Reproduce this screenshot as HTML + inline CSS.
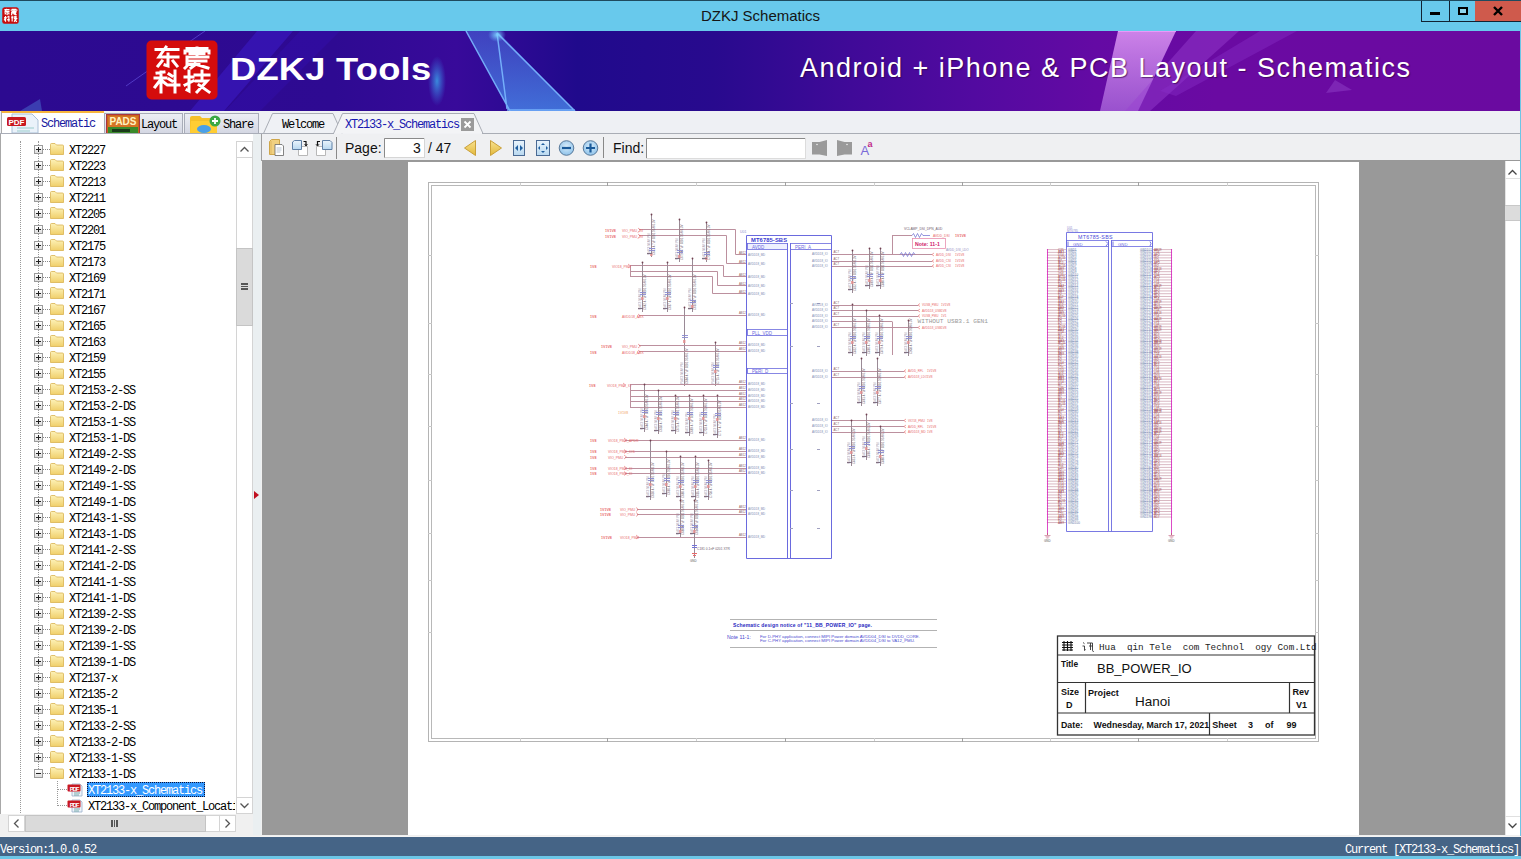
<!DOCTYPE html>
<html><head><meta charset="utf-8">
<style>
*{margin:0;padding:0;box-sizing:border-box}
html,body{width:1521px;height:859px;overflow:hidden;background:#f0f0f0;font-family:"Liberation Sans",sans-serif}
.abs{position:absolute}
#titlebar{left:0;top:0;width:1521px;height:31px;background:#68c9ec;border-top:1px solid #1e4a5e}
#title{left:0;top:7px;width:1521px;text-align:center;font-size:15px;color:#151515}
#banner{left:0;top:31px;width:1520px;height:80px;background:linear-gradient(90deg,#2e0990 0%,#2d0a8e 45%,#2b0a90 52%,#3f0b98 58%,#520aa0 66%,#5e0aa2 74%,#690aa0 85%,#6b0a9d 100%)}
#tabbar{left:0;top:111px;width:1520px;height:23px;background:#eef0f4}
#left{left:0;top:134px;width:253px;height:701px;background:#fff}
#splitter{left:253px;top:134px;width:8px;height:701px;background:#eaeff1}
#toolbar{left:262px;top:134px;width:1259px;height:27px;background:#eff0f2;border-bottom:1px solid #999}
#viewer{left:262px;top:161px;width:1243px;height:674px;background:#999}
#page{left:408px;top:162px;width:951px;height:673px;background:#fff}
#vscroll{left:1505px;top:161px;width:15px;height:674px;background:#fff}
#status{left:0;top:836px;width:1521px;height:23px;background:#456486;border-bottom:3px solid #6cc6e6;border-top:1px solid #f4f4f4}
.mono{font-family:"Liberation Mono",monospace}
.tree{font-family:"Liberation Mono",monospace;font-size:12px;letter-spacing:-1.2px;color:#000;line-height:16px;white-space:nowrap}
.row{position:absolute;left:0;height:16px;width:235px}
.row .t{position:absolute;left:69px;top:2px}
.pbox{position:absolute;left:34px;top:4px;width:9px;height:9px;border:1px solid #9b9b9b;background:linear-gradient(#fff,#ddd)}
.pbox:before{content:"";position:absolute;left:1px;top:3px;width:5px;height:1px;background:#222}
.pbox.p:after{content:"";position:absolute;left:3px;top:1px;width:1px;height:5px;background:#222}
.hd{position:absolute;left:43px;top:8px;width:7px;border-top:1px dotted #888}
.fold{position:absolute;left:50px;top:2px;width:14px;height:12px}
.tabtxt{font-family:"Liberation Mono",monospace;font-size:12px;letter-spacing:-1.2px;white-space:nowrap}
</style></head><body>
<div id="titlebar" class="abs"></div>
<svg class="abs" style="left:2px;top:7px" width="17" height="17" viewBox="0 0 72 60" preserveAspectRatio="none"><rect x="1" y="1" width="70" height="58" rx="9" fill="#c80c0c"/><g stroke="#fff" stroke-width="5" fill="none"><g transform="translate(8,7)"><path d="M2 2.5H24M12 0L5 10H24M14 7V19L11 18M8 14L4 19M19 14L23 19"/></g><g transform="translate(38,7)"><path d="M3 1.5H23M1 6V4H25V6M13 1V8M3 10H24M3 10V19L1 21M6 14H22M11 17L24 21"/></g><g transform="translate(8,31)"><path d="M1 7H12M7 1V21M7 8L1 16M15 3L18 5M14 14H25M21 0V21"/></g><g transform="translate(38,31)"><path d="M1 6H9M5 0V20M11 4H25M18 0V9M12 10H23L13 21M15 14L25 21"/></g></g></svg>
<div id="title" class="abs">DZKJ Schematics</div>
<div class="abs" style="left:1421px;top:1px;width:29px;height:21px;border:1px solid #123;border-top:0;border-right:0"></div>
<div class="abs" style="left:1449px;top:1px;width:26px;height:21px;border-left:1px solid #123;border-bottom:1px solid #123"></div>
<div class="abs" style="left:1475px;top:1px;width:46px;height:21px;background:#cf5a4c;border-bottom:1px solid #123"></div>
<div class="abs" style="left:1430px;top:12px;width:10px;height:3px;background:#000"></div>
<div class="abs" style="left:1458px;top:7px;width:10px;height:8px;border:2px solid #000;background:#8fd6ee"></div>
<svg class="abs" style="left:1493px;top:6px" width="10" height="10" viewBox="0 0 10 10"><path d="M1 1L9 9M9 1L1 9" stroke="#000" stroke-width="2.4"/></svg>

<div id="banner" class="abs"></div>
<svg class="abs" style="left:0;top:31px" width="1520" height="80" viewBox="0 0 1520 80">
  <defs>
    <radialGradient id="glow" cx="0.5" cy="0.5" r="0.5"><stop offset="0" stop-color="#7fd8ff" stop-opacity="0.9"/><stop offset="1" stop-color="#6fb8ff" stop-opacity="0"/></radialGradient>
    <radialGradient id="glow2" cx="0.5" cy="0.5" r="0.5"><stop offset="0" stop-color="#3aa0e8" stop-opacity="0.85"/><stop offset="1" stop-color="#3a80e8" stop-opacity="0"/></radialGradient>
    <linearGradient id="bg" x1="0" y1="0" x2="1520" y2="0" gradientUnits="userSpaceOnUse">
      <stop offset="0" stop-color="#2c0a90"/><stop offset="0.22" stop-color="#2e0a92"/><stop offset="0.3" stop-color="#380a9a"/>
      <stop offset="0.38" stop-color="#200a8c"/><stop offset="0.47" stop-color="#280a8e"/><stop offset="0.56" stop-color="#400a98"/>
      <stop offset="0.64" stop-color="#520aa0"/><stop offset="0.72" stop-color="#640aa4"/><stop offset="0.8" stop-color="#6a0aa2"/><stop offset="1" stop-color="#6a0aa0"/>
    </linearGradient>
    <linearGradient id="shard" x1="0" y1="0" x2="0" y2="1"><stop offset="0" stop-color="#4a70e0" stop-opacity="0.55"/><stop offset="1" stop-color="#4a90f0" stop-opacity="0.75"/></linearGradient>
    <linearGradient id="pink" x1="0" y1="0" x2="0" y2="1"><stop offset="0" stop-color="#d890f0" stop-opacity="0.9"/><stop offset="1" stop-color="#b070e0" stop-opacity="0.7"/></linearGradient>
  </defs>
  <rect x="0" y="0" width="1520" height="80" fill="url(#bg)"/>
  <polygon points="257,0 293,0 224,80 190,80" fill="#3c1cc8" opacity="0.55"/>
  <polygon points="300,0 340,0 260,80 225,80" fill="#3414b8" opacity="0.3"/>
  <path d="M205 0L126 55" stroke="#6a5ae8" stroke-width="1" opacity="0.6"/>
  <polygon points="466,0 497,0 575,80 510,80" fill="url(#shard)"/>
  <path d="M466 0L510 80M497 2L507 78M497 2L575 80M507 79H575" stroke="#7ab8ff" stroke-width="1.5" fill="none" opacity="0.9"/>
  <ellipse cx="497" cy="4" rx="9" ry="7" fill="url(#glow)"/>
  <ellipse cx="437" cy="50" rx="9" ry="25" fill="url(#glow2)"/>
  <polygon points="1118,0 1176,0 1138,80 1100,80" fill="url(#pink)"/>
  <path d="M1118 0H1176" stroke="#f0a0ff" stroke-width="2" opacity="0.8"/>
  <polygon points="1196,0 1239,0 1150,80 1125,80" fill="#9a40d0" opacity="0.45"/>
  <polygon points="1260,0 1297,0 1176,65 1160,60" fill="#8a30c8" opacity="0.4"/>
  <polygon points="1326,62 1352,59 1335,49" fill="#9040c8" opacity="0.5"/>
  <polygon points="20,80 40,68 42,80" fill="#4a70d0" opacity="0.5"/>
</svg>
<svg class="abs" style="left:146px;top:40px" width="72" height="60" viewBox="0 0 72 60">
  <rect x="0.5" y="0.5" width="71" height="59" rx="5" fill="#d40c0c"/>
  <g stroke="#fff" stroke-width="3.0" fill="none" stroke-linecap="square">
   <g transform="translate(8,7)"><path d="M2 2.5H24M12 0L5 10H24M14 7V19L11 18M8 14L4 19M19 14L23 19"/></g>
   <g transform="translate(38,7)"><path d="M3 1.5H23M1 6V4H25V6M13 1V8M6 6.5H10M16 6.5H20M3 10H24M3 10V19L1 21M6 14H22M6 17.5H15M11 17L24 21M7 21L11 18"/></g>
   <g transform="translate(8,31)"><path d="M3 2L10 1M1 7H12M7 1V21M7 8L1 16M7 9L12 13M15 3L18 5M15 8L18 10M14 14H25M21 0V21"/></g>
   <g transform="translate(38,31)"><path d="M1 6H9M5 0V20L3 19M1 14L9 10M11 4H25M18 0V9M12 10H23L13 21M15 14L25 21"/></g>
  </g>
</svg>
<div class="abs" style="left:230px;top:51px;font-size:32px;font-weight:bold;color:#fff;letter-spacing:0.2px;white-space:nowrap;transform:scaleX(1.135);transform-origin:0 0">DZKJ Tools</div>
<div class="abs" style="left:800px;top:53px;font-size:27px;color:#fff;letter-spacing:1.5px;white-space:nowrap;text-shadow:1px 1px 1px rgba(40,0,60,0.6)">Android + iPhone &amp; PCB Layout - Schematics</div>

<div id="tabbar" class="abs"></div>
<!-- schematic tab -->
<div class="abs" style="left:1px;top:111px;width:103px;height:24px;background:#fff;border-top:2px solid #f7b53d;border-left:1px solid #aaa"></div>
<svg class="abs" style="left:6px;top:113px" width="34" height="21" viewBox="0 0 34 21"><path d="M6 1H26L32 7V20H6Z" fill="#eaf2fa" stroke="#aac0d8"/><path d="M11 15H28M11 18H24" stroke="#9cc" stroke-width="1.2"/><rect x="1" y="4" width="19" height="9" rx="1.5" fill="#c81820"/><text x="10.5" y="11.8" font-size="8" font-family="Liberation Sans" font-weight="bold" fill="#fff" text-anchor="middle">PDF</text></svg>
<div class="abs tabtxt" style="left:41px;top:117px;color:#1818a0">Schematic</div>
<!-- layout tab -->
<div class="abs" style="left:104px;top:113px;width:79px;height:21px;background:linear-gradient(#eceef4,#d3d6e2);border:1px solid #a8acb8;border-bottom:0"></div>
<svg class="abs" style="left:106px;top:114px" width="34" height="20" viewBox="0 0 34 20"><rect x="0.5" y="0.5" width="33" height="19.5" fill="#c8661a" stroke="#a34"/><rect x="2" y="2" width="30" height="17" fill="#d67424"/><text x="17" y="11" font-size="10" font-family="Liberation Sans" font-weight="bold" fill="#fff3c0" text-anchor="middle">PADS</text><rect x="2" y="13" width="30" height="7" fill="#3a8a2a"/><rect x="6" y="15" width="18" height="3" fill="#1a3a1a"/></svg>
<div class="abs tabtxt" style="left:141px;top:118px;color:#000">Layout</div>
<!-- share tab -->
<div class="abs" style="left:184px;top:113px;width:75px;height:21px;background:linear-gradient(#eceef4,#d3d6e2);border:1px solid #a8acb8;border-bottom:0"></div>
<svg class="abs" style="left:189px;top:114px" width="34" height="20" viewBox="0 0 34 20"><path d="M1 4Q1 2 3 2H11L13 4H28V20H1Z" fill="#f5c02a"/><path d="M2 7H28V20H1Z" fill="#ffcd33"/><ellipse cx="15" cy="15" rx="7" ry="4" fill="#4aa0e8"/><circle cx="26" cy="7" r="5.5" fill="#3aa844"/><path d="M26 4V10M23 7H29" stroke="#fff" stroke-width="1.8"/></svg>
<div class="abs tabtxt" style="left:223px;top:118px;color:#000">Share</div>
<!-- document tabs -->
<svg class="abs" style="left:255px;top:111px" width="1266" height="24" viewBox="0 0 1266 24">
  <path d="M8.5 22.5L17.5 2.5H78L87 22.5" fill="#eff1f5" stroke="#a9adb5"/>
  <path d="M78.5 22.5L87.5 2.5H219L228 22.5" fill="#f3f4f6" stroke="#a9adb5"/>
  <path d="M0 22.5H79M227 22.5H1266" stroke="#a9adb5"/>
</svg>
<div class="abs tabtxt" style="left:282px;top:118px;color:#000">Welcome</div>
<div class="abs tabtxt" style="left:345px;top:118px;color:#1818b0">XT2133-x_Schematics</div>
<div class="abs" style="left:461px;top:118px;width:13px;height:13px;background:#9a9a9a"></div>
<svg class="abs" style="left:461px;top:118px" width="13" height="13"><path d="M3.5 3.5L9.5 9.5M9.5 3.5L3.5 9.5" stroke="#fff" stroke-width="1.8"/></svg>

<!-- left tree panel -->
<div id="left" class="abs"></div>
<div id="splitter" class="abs"></div>
<div class="abs" style="left:0;top:133px;width:262px;height:1px;background:#a9adb8"></div>
<div class="abs" style="left:0;top:134px;width:1px;height:701px;background:#a8a8a8"></div>
<svg class="abs" style="left:254px;top:491px" width="5" height="8"><path d="M0 0L5 4L0 8Z" fill="#c01020"/></svg>
<div id="tree" class="abs tree" style="left:0;top:141px;width:235px;height:674px;overflow:hidden">
<div style="position:absolute;left:20px;top:0;height:674px;border-left:1px dotted #999"></div>
<div style="position:absolute;left:38px;top:0;height:632px;border-left:1px dotted #999"></div>
<div class="row" style="top:0px"><div class="hd"></div><div class="pbox p"></div><svg class="fold" viewBox="0 0 14 12"><defs><linearGradient id="fg" x1="0" y1="0" x2="0" y2="1"><stop offset="0" stop-color="#fdf2b8"/><stop offset="1" stop-color="#f0cf6a"/></linearGradient></defs><path d="M0.5 1.5Q0.5 0.5 1.5 0.5H5L6.5 2H12.5Q13.5 2 13.5 3V11.5H0.5Z" fill="url(#fg)" stroke="#d9b250" stroke-width="0.8"/></svg><span class="t">XT2227</span></div>
<div class="row" style="top:16px"><div class="hd"></div><div class="pbox p"></div><svg class="fold" viewBox="0 0 14 12"><defs><linearGradient id="fg" x1="0" y1="0" x2="0" y2="1"><stop offset="0" stop-color="#fdf2b8"/><stop offset="1" stop-color="#f0cf6a"/></linearGradient></defs><path d="M0.5 1.5Q0.5 0.5 1.5 0.5H5L6.5 2H12.5Q13.5 2 13.5 3V11.5H0.5Z" fill="url(#fg)" stroke="#d9b250" stroke-width="0.8"/></svg><span class="t">XT2223</span></div>
<div class="row" style="top:32px"><div class="hd"></div><div class="pbox p"></div><svg class="fold" viewBox="0 0 14 12"><defs><linearGradient id="fg" x1="0" y1="0" x2="0" y2="1"><stop offset="0" stop-color="#fdf2b8"/><stop offset="1" stop-color="#f0cf6a"/></linearGradient></defs><path d="M0.5 1.5Q0.5 0.5 1.5 0.5H5L6.5 2H12.5Q13.5 2 13.5 3V11.5H0.5Z" fill="url(#fg)" stroke="#d9b250" stroke-width="0.8"/></svg><span class="t">XT2213</span></div>
<div class="row" style="top:48px"><div class="hd"></div><div class="pbox p"></div><svg class="fold" viewBox="0 0 14 12"><defs><linearGradient id="fg" x1="0" y1="0" x2="0" y2="1"><stop offset="0" stop-color="#fdf2b8"/><stop offset="1" stop-color="#f0cf6a"/></linearGradient></defs><path d="M0.5 1.5Q0.5 0.5 1.5 0.5H5L6.5 2H12.5Q13.5 2 13.5 3V11.5H0.5Z" fill="url(#fg)" stroke="#d9b250" stroke-width="0.8"/></svg><span class="t">XT2211</span></div>
<div class="row" style="top:64px"><div class="hd"></div><div class="pbox p"></div><svg class="fold" viewBox="0 0 14 12"><defs><linearGradient id="fg" x1="0" y1="0" x2="0" y2="1"><stop offset="0" stop-color="#fdf2b8"/><stop offset="1" stop-color="#f0cf6a"/></linearGradient></defs><path d="M0.5 1.5Q0.5 0.5 1.5 0.5H5L6.5 2H12.5Q13.5 2 13.5 3V11.5H0.5Z" fill="url(#fg)" stroke="#d9b250" stroke-width="0.8"/></svg><span class="t">XT2205</span></div>
<div class="row" style="top:80px"><div class="hd"></div><div class="pbox p"></div><svg class="fold" viewBox="0 0 14 12"><defs><linearGradient id="fg" x1="0" y1="0" x2="0" y2="1"><stop offset="0" stop-color="#fdf2b8"/><stop offset="1" stop-color="#f0cf6a"/></linearGradient></defs><path d="M0.5 1.5Q0.5 0.5 1.5 0.5H5L6.5 2H12.5Q13.5 2 13.5 3V11.5H0.5Z" fill="url(#fg)" stroke="#d9b250" stroke-width="0.8"/></svg><span class="t">XT2201</span></div>
<div class="row" style="top:96px"><div class="hd"></div><div class="pbox p"></div><svg class="fold" viewBox="0 0 14 12"><defs><linearGradient id="fg" x1="0" y1="0" x2="0" y2="1"><stop offset="0" stop-color="#fdf2b8"/><stop offset="1" stop-color="#f0cf6a"/></linearGradient></defs><path d="M0.5 1.5Q0.5 0.5 1.5 0.5H5L6.5 2H12.5Q13.5 2 13.5 3V11.5H0.5Z" fill="url(#fg)" stroke="#d9b250" stroke-width="0.8"/></svg><span class="t">XT2175</span></div>
<div class="row" style="top:112px"><div class="hd"></div><div class="pbox p"></div><svg class="fold" viewBox="0 0 14 12"><defs><linearGradient id="fg" x1="0" y1="0" x2="0" y2="1"><stop offset="0" stop-color="#fdf2b8"/><stop offset="1" stop-color="#f0cf6a"/></linearGradient></defs><path d="M0.5 1.5Q0.5 0.5 1.5 0.5H5L6.5 2H12.5Q13.5 2 13.5 3V11.5H0.5Z" fill="url(#fg)" stroke="#d9b250" stroke-width="0.8"/></svg><span class="t">XT2173</span></div>
<div class="row" style="top:128px"><div class="hd"></div><div class="pbox p"></div><svg class="fold" viewBox="0 0 14 12"><defs><linearGradient id="fg" x1="0" y1="0" x2="0" y2="1"><stop offset="0" stop-color="#fdf2b8"/><stop offset="1" stop-color="#f0cf6a"/></linearGradient></defs><path d="M0.5 1.5Q0.5 0.5 1.5 0.5H5L6.5 2H12.5Q13.5 2 13.5 3V11.5H0.5Z" fill="url(#fg)" stroke="#d9b250" stroke-width="0.8"/></svg><span class="t">XT2169</span></div>
<div class="row" style="top:144px"><div class="hd"></div><div class="pbox p"></div><svg class="fold" viewBox="0 0 14 12"><defs><linearGradient id="fg" x1="0" y1="0" x2="0" y2="1"><stop offset="0" stop-color="#fdf2b8"/><stop offset="1" stop-color="#f0cf6a"/></linearGradient></defs><path d="M0.5 1.5Q0.5 0.5 1.5 0.5H5L6.5 2H12.5Q13.5 2 13.5 3V11.5H0.5Z" fill="url(#fg)" stroke="#d9b250" stroke-width="0.8"/></svg><span class="t">XT2171</span></div>
<div class="row" style="top:160px"><div class="hd"></div><div class="pbox p"></div><svg class="fold" viewBox="0 0 14 12"><defs><linearGradient id="fg" x1="0" y1="0" x2="0" y2="1"><stop offset="0" stop-color="#fdf2b8"/><stop offset="1" stop-color="#f0cf6a"/></linearGradient></defs><path d="M0.5 1.5Q0.5 0.5 1.5 0.5H5L6.5 2H12.5Q13.5 2 13.5 3V11.5H0.5Z" fill="url(#fg)" stroke="#d9b250" stroke-width="0.8"/></svg><span class="t">XT2167</span></div>
<div class="row" style="top:176px"><div class="hd"></div><div class="pbox p"></div><svg class="fold" viewBox="0 0 14 12"><defs><linearGradient id="fg" x1="0" y1="0" x2="0" y2="1"><stop offset="0" stop-color="#fdf2b8"/><stop offset="1" stop-color="#f0cf6a"/></linearGradient></defs><path d="M0.5 1.5Q0.5 0.5 1.5 0.5H5L6.5 2H12.5Q13.5 2 13.5 3V11.5H0.5Z" fill="url(#fg)" stroke="#d9b250" stroke-width="0.8"/></svg><span class="t">XT2165</span></div>
<div class="row" style="top:192px"><div class="hd"></div><div class="pbox p"></div><svg class="fold" viewBox="0 0 14 12"><defs><linearGradient id="fg" x1="0" y1="0" x2="0" y2="1"><stop offset="0" stop-color="#fdf2b8"/><stop offset="1" stop-color="#f0cf6a"/></linearGradient></defs><path d="M0.5 1.5Q0.5 0.5 1.5 0.5H5L6.5 2H12.5Q13.5 2 13.5 3V11.5H0.5Z" fill="url(#fg)" stroke="#d9b250" stroke-width="0.8"/></svg><span class="t">XT2163</span></div>
<div class="row" style="top:208px"><div class="hd"></div><div class="pbox p"></div><svg class="fold" viewBox="0 0 14 12"><defs><linearGradient id="fg" x1="0" y1="0" x2="0" y2="1"><stop offset="0" stop-color="#fdf2b8"/><stop offset="1" stop-color="#f0cf6a"/></linearGradient></defs><path d="M0.5 1.5Q0.5 0.5 1.5 0.5H5L6.5 2H12.5Q13.5 2 13.5 3V11.5H0.5Z" fill="url(#fg)" stroke="#d9b250" stroke-width="0.8"/></svg><span class="t">XT2159</span></div>
<div class="row" style="top:224px"><div class="hd"></div><div class="pbox p"></div><svg class="fold" viewBox="0 0 14 12"><defs><linearGradient id="fg" x1="0" y1="0" x2="0" y2="1"><stop offset="0" stop-color="#fdf2b8"/><stop offset="1" stop-color="#f0cf6a"/></linearGradient></defs><path d="M0.5 1.5Q0.5 0.5 1.5 0.5H5L6.5 2H12.5Q13.5 2 13.5 3V11.5H0.5Z" fill="url(#fg)" stroke="#d9b250" stroke-width="0.8"/></svg><span class="t">XT2155</span></div>
<div class="row" style="top:240px"><div class="hd"></div><div class="pbox p"></div><svg class="fold" viewBox="0 0 14 12"><defs><linearGradient id="fg" x1="0" y1="0" x2="0" y2="1"><stop offset="0" stop-color="#fdf2b8"/><stop offset="1" stop-color="#f0cf6a"/></linearGradient></defs><path d="M0.5 1.5Q0.5 0.5 1.5 0.5H5L6.5 2H12.5Q13.5 2 13.5 3V11.5H0.5Z" fill="url(#fg)" stroke="#d9b250" stroke-width="0.8"/></svg><span class="t">XT2153-2-SS</span></div>
<div class="row" style="top:256px"><div class="hd"></div><div class="pbox p"></div><svg class="fold" viewBox="0 0 14 12"><defs><linearGradient id="fg" x1="0" y1="0" x2="0" y2="1"><stop offset="0" stop-color="#fdf2b8"/><stop offset="1" stop-color="#f0cf6a"/></linearGradient></defs><path d="M0.5 1.5Q0.5 0.5 1.5 0.5H5L6.5 2H12.5Q13.5 2 13.5 3V11.5H0.5Z" fill="url(#fg)" stroke="#d9b250" stroke-width="0.8"/></svg><span class="t">XT2153-2-DS</span></div>
<div class="row" style="top:272px"><div class="hd"></div><div class="pbox p"></div><svg class="fold" viewBox="0 0 14 12"><defs><linearGradient id="fg" x1="0" y1="0" x2="0" y2="1"><stop offset="0" stop-color="#fdf2b8"/><stop offset="1" stop-color="#f0cf6a"/></linearGradient></defs><path d="M0.5 1.5Q0.5 0.5 1.5 0.5H5L6.5 2H12.5Q13.5 2 13.5 3V11.5H0.5Z" fill="url(#fg)" stroke="#d9b250" stroke-width="0.8"/></svg><span class="t">XT2153-1-SS</span></div>
<div class="row" style="top:288px"><div class="hd"></div><div class="pbox p"></div><svg class="fold" viewBox="0 0 14 12"><defs><linearGradient id="fg" x1="0" y1="0" x2="0" y2="1"><stop offset="0" stop-color="#fdf2b8"/><stop offset="1" stop-color="#f0cf6a"/></linearGradient></defs><path d="M0.5 1.5Q0.5 0.5 1.5 0.5H5L6.5 2H12.5Q13.5 2 13.5 3V11.5H0.5Z" fill="url(#fg)" stroke="#d9b250" stroke-width="0.8"/></svg><span class="t">XT2153-1-DS</span></div>
<div class="row" style="top:304px"><div class="hd"></div><div class="pbox p"></div><svg class="fold" viewBox="0 0 14 12"><defs><linearGradient id="fg" x1="0" y1="0" x2="0" y2="1"><stop offset="0" stop-color="#fdf2b8"/><stop offset="1" stop-color="#f0cf6a"/></linearGradient></defs><path d="M0.5 1.5Q0.5 0.5 1.5 0.5H5L6.5 2H12.5Q13.5 2 13.5 3V11.5H0.5Z" fill="url(#fg)" stroke="#d9b250" stroke-width="0.8"/></svg><span class="t">XT2149-2-SS</span></div>
<div class="row" style="top:320px"><div class="hd"></div><div class="pbox p"></div><svg class="fold" viewBox="0 0 14 12"><defs><linearGradient id="fg" x1="0" y1="0" x2="0" y2="1"><stop offset="0" stop-color="#fdf2b8"/><stop offset="1" stop-color="#f0cf6a"/></linearGradient></defs><path d="M0.5 1.5Q0.5 0.5 1.5 0.5H5L6.5 2H12.5Q13.5 2 13.5 3V11.5H0.5Z" fill="url(#fg)" stroke="#d9b250" stroke-width="0.8"/></svg><span class="t">XT2149-2-DS</span></div>
<div class="row" style="top:336px"><div class="hd"></div><div class="pbox p"></div><svg class="fold" viewBox="0 0 14 12"><defs><linearGradient id="fg" x1="0" y1="0" x2="0" y2="1"><stop offset="0" stop-color="#fdf2b8"/><stop offset="1" stop-color="#f0cf6a"/></linearGradient></defs><path d="M0.5 1.5Q0.5 0.5 1.5 0.5H5L6.5 2H12.5Q13.5 2 13.5 3V11.5H0.5Z" fill="url(#fg)" stroke="#d9b250" stroke-width="0.8"/></svg><span class="t">XT2149-1-SS</span></div>
<div class="row" style="top:352px"><div class="hd"></div><div class="pbox p"></div><svg class="fold" viewBox="0 0 14 12"><defs><linearGradient id="fg" x1="0" y1="0" x2="0" y2="1"><stop offset="0" stop-color="#fdf2b8"/><stop offset="1" stop-color="#f0cf6a"/></linearGradient></defs><path d="M0.5 1.5Q0.5 0.5 1.5 0.5H5L6.5 2H12.5Q13.5 2 13.5 3V11.5H0.5Z" fill="url(#fg)" stroke="#d9b250" stroke-width="0.8"/></svg><span class="t">XT2149-1-DS</span></div>
<div class="row" style="top:368px"><div class="hd"></div><div class="pbox p"></div><svg class="fold" viewBox="0 0 14 12"><defs><linearGradient id="fg" x1="0" y1="0" x2="0" y2="1"><stop offset="0" stop-color="#fdf2b8"/><stop offset="1" stop-color="#f0cf6a"/></linearGradient></defs><path d="M0.5 1.5Q0.5 0.5 1.5 0.5H5L6.5 2H12.5Q13.5 2 13.5 3V11.5H0.5Z" fill="url(#fg)" stroke="#d9b250" stroke-width="0.8"/></svg><span class="t">XT2143-1-SS</span></div>
<div class="row" style="top:384px"><div class="hd"></div><div class="pbox p"></div><svg class="fold" viewBox="0 0 14 12"><defs><linearGradient id="fg" x1="0" y1="0" x2="0" y2="1"><stop offset="0" stop-color="#fdf2b8"/><stop offset="1" stop-color="#f0cf6a"/></linearGradient></defs><path d="M0.5 1.5Q0.5 0.5 1.5 0.5H5L6.5 2H12.5Q13.5 2 13.5 3V11.5H0.5Z" fill="url(#fg)" stroke="#d9b250" stroke-width="0.8"/></svg><span class="t">XT2143-1-DS</span></div>
<div class="row" style="top:400px"><div class="hd"></div><div class="pbox p"></div><svg class="fold" viewBox="0 0 14 12"><defs><linearGradient id="fg" x1="0" y1="0" x2="0" y2="1"><stop offset="0" stop-color="#fdf2b8"/><stop offset="1" stop-color="#f0cf6a"/></linearGradient></defs><path d="M0.5 1.5Q0.5 0.5 1.5 0.5H5L6.5 2H12.5Q13.5 2 13.5 3V11.5H0.5Z" fill="url(#fg)" stroke="#d9b250" stroke-width="0.8"/></svg><span class="t">XT2141-2-SS</span></div>
<div class="row" style="top:416px"><div class="hd"></div><div class="pbox p"></div><svg class="fold" viewBox="0 0 14 12"><defs><linearGradient id="fg" x1="0" y1="0" x2="0" y2="1"><stop offset="0" stop-color="#fdf2b8"/><stop offset="1" stop-color="#f0cf6a"/></linearGradient></defs><path d="M0.5 1.5Q0.5 0.5 1.5 0.5H5L6.5 2H12.5Q13.5 2 13.5 3V11.5H0.5Z" fill="url(#fg)" stroke="#d9b250" stroke-width="0.8"/></svg><span class="t">XT2141-2-DS</span></div>
<div class="row" style="top:432px"><div class="hd"></div><div class="pbox p"></div><svg class="fold" viewBox="0 0 14 12"><defs><linearGradient id="fg" x1="0" y1="0" x2="0" y2="1"><stop offset="0" stop-color="#fdf2b8"/><stop offset="1" stop-color="#f0cf6a"/></linearGradient></defs><path d="M0.5 1.5Q0.5 0.5 1.5 0.5H5L6.5 2H12.5Q13.5 2 13.5 3V11.5H0.5Z" fill="url(#fg)" stroke="#d9b250" stroke-width="0.8"/></svg><span class="t">XT2141-1-SS</span></div>
<div class="row" style="top:448px"><div class="hd"></div><div class="pbox p"></div><svg class="fold" viewBox="0 0 14 12"><defs><linearGradient id="fg" x1="0" y1="0" x2="0" y2="1"><stop offset="0" stop-color="#fdf2b8"/><stop offset="1" stop-color="#f0cf6a"/></linearGradient></defs><path d="M0.5 1.5Q0.5 0.5 1.5 0.5H5L6.5 2H12.5Q13.5 2 13.5 3V11.5H0.5Z" fill="url(#fg)" stroke="#d9b250" stroke-width="0.8"/></svg><span class="t">XT2141-1-DS</span></div>
<div class="row" style="top:464px"><div class="hd"></div><div class="pbox p"></div><svg class="fold" viewBox="0 0 14 12"><defs><linearGradient id="fg" x1="0" y1="0" x2="0" y2="1"><stop offset="0" stop-color="#fdf2b8"/><stop offset="1" stop-color="#f0cf6a"/></linearGradient></defs><path d="M0.5 1.5Q0.5 0.5 1.5 0.5H5L6.5 2H12.5Q13.5 2 13.5 3V11.5H0.5Z" fill="url(#fg)" stroke="#d9b250" stroke-width="0.8"/></svg><span class="t">XT2139-2-SS</span></div>
<div class="row" style="top:480px"><div class="hd"></div><div class="pbox p"></div><svg class="fold" viewBox="0 0 14 12"><defs><linearGradient id="fg" x1="0" y1="0" x2="0" y2="1"><stop offset="0" stop-color="#fdf2b8"/><stop offset="1" stop-color="#f0cf6a"/></linearGradient></defs><path d="M0.5 1.5Q0.5 0.5 1.5 0.5H5L6.5 2H12.5Q13.5 2 13.5 3V11.5H0.5Z" fill="url(#fg)" stroke="#d9b250" stroke-width="0.8"/></svg><span class="t">XT2139-2-DS</span></div>
<div class="row" style="top:496px"><div class="hd"></div><div class="pbox p"></div><svg class="fold" viewBox="0 0 14 12"><defs><linearGradient id="fg" x1="0" y1="0" x2="0" y2="1"><stop offset="0" stop-color="#fdf2b8"/><stop offset="1" stop-color="#f0cf6a"/></linearGradient></defs><path d="M0.5 1.5Q0.5 0.5 1.5 0.5H5L6.5 2H12.5Q13.5 2 13.5 3V11.5H0.5Z" fill="url(#fg)" stroke="#d9b250" stroke-width="0.8"/></svg><span class="t">XT2139-1-SS</span></div>
<div class="row" style="top:512px"><div class="hd"></div><div class="pbox p"></div><svg class="fold" viewBox="0 0 14 12"><defs><linearGradient id="fg" x1="0" y1="0" x2="0" y2="1"><stop offset="0" stop-color="#fdf2b8"/><stop offset="1" stop-color="#f0cf6a"/></linearGradient></defs><path d="M0.5 1.5Q0.5 0.5 1.5 0.5H5L6.5 2H12.5Q13.5 2 13.5 3V11.5H0.5Z" fill="url(#fg)" stroke="#d9b250" stroke-width="0.8"/></svg><span class="t">XT2139-1-DS</span></div>
<div class="row" style="top:528px"><div class="hd"></div><div class="pbox p"></div><svg class="fold" viewBox="0 0 14 12"><defs><linearGradient id="fg" x1="0" y1="0" x2="0" y2="1"><stop offset="0" stop-color="#fdf2b8"/><stop offset="1" stop-color="#f0cf6a"/></linearGradient></defs><path d="M0.5 1.5Q0.5 0.5 1.5 0.5H5L6.5 2H12.5Q13.5 2 13.5 3V11.5H0.5Z" fill="url(#fg)" stroke="#d9b250" stroke-width="0.8"/></svg><span class="t">XT2137-x</span></div>
<div class="row" style="top:544px"><div class="hd"></div><div class="pbox p"></div><svg class="fold" viewBox="0 0 14 12"><defs><linearGradient id="fg" x1="0" y1="0" x2="0" y2="1"><stop offset="0" stop-color="#fdf2b8"/><stop offset="1" stop-color="#f0cf6a"/></linearGradient></defs><path d="M0.5 1.5Q0.5 0.5 1.5 0.5H5L6.5 2H12.5Q13.5 2 13.5 3V11.5H0.5Z" fill="url(#fg)" stroke="#d9b250" stroke-width="0.8"/></svg><span class="t">XT2135-2</span></div>
<div class="row" style="top:560px"><div class="hd"></div><div class="pbox p"></div><svg class="fold" viewBox="0 0 14 12"><defs><linearGradient id="fg" x1="0" y1="0" x2="0" y2="1"><stop offset="0" stop-color="#fdf2b8"/><stop offset="1" stop-color="#f0cf6a"/></linearGradient></defs><path d="M0.5 1.5Q0.5 0.5 1.5 0.5H5L6.5 2H12.5Q13.5 2 13.5 3V11.5H0.5Z" fill="url(#fg)" stroke="#d9b250" stroke-width="0.8"/></svg><span class="t">XT2135-1</span></div>
<div class="row" style="top:576px"><div class="hd"></div><div class="pbox p"></div><svg class="fold" viewBox="0 0 14 12"><defs><linearGradient id="fg" x1="0" y1="0" x2="0" y2="1"><stop offset="0" stop-color="#fdf2b8"/><stop offset="1" stop-color="#f0cf6a"/></linearGradient></defs><path d="M0.5 1.5Q0.5 0.5 1.5 0.5H5L6.5 2H12.5Q13.5 2 13.5 3V11.5H0.5Z" fill="url(#fg)" stroke="#d9b250" stroke-width="0.8"/></svg><span class="t">XT2133-2-SS</span></div>
<div class="row" style="top:592px"><div class="hd"></div><div class="pbox p"></div><svg class="fold" viewBox="0 0 14 12"><defs><linearGradient id="fg" x1="0" y1="0" x2="0" y2="1"><stop offset="0" stop-color="#fdf2b8"/><stop offset="1" stop-color="#f0cf6a"/></linearGradient></defs><path d="M0.5 1.5Q0.5 0.5 1.5 0.5H5L6.5 2H12.5Q13.5 2 13.5 3V11.5H0.5Z" fill="url(#fg)" stroke="#d9b250" stroke-width="0.8"/></svg><span class="t">XT2133-2-DS</span></div>
<div class="row" style="top:608px"><div class="hd"></div><div class="pbox p"></div><svg class="fold" viewBox="0 0 14 12"><defs><linearGradient id="fg" x1="0" y1="0" x2="0" y2="1"><stop offset="0" stop-color="#fdf2b8"/><stop offset="1" stop-color="#f0cf6a"/></linearGradient></defs><path d="M0.5 1.5Q0.5 0.5 1.5 0.5H5L6.5 2H12.5Q13.5 2 13.5 3V11.5H0.5Z" fill="url(#fg)" stroke="#d9b250" stroke-width="0.8"/></svg><span class="t">XT2133-1-SS</span></div>
<div class="row" style="top:624px"><div class="hd"></div><div class="pbox"></div><svg class="fold" viewBox="0 0 14 12"><defs><linearGradient id="fg" x1="0" y1="0" x2="0" y2="1"><stop offset="0" stop-color="#fdf2b8"/><stop offset="1" stop-color="#f0cf6a"/></linearGradient></defs><path d="M0.5 1.5Q0.5 0.5 1.5 0.5H5L6.5 2H12.5Q13.5 2 13.5 3V11.5H0.5Z" fill="url(#fg)" stroke="#d9b250" stroke-width="0.8"/></svg><span class="t">XT2133-1-DS</span></div>
<div style="position:absolute;left:57px;top:640px;height:25px;border-left:1px dotted #999"></div>
<div style="position:absolute;left:57px;top:648px;width:10px;border-top:1px dotted #999"></div>
<div style="position:absolute;left:57px;top:664px;width:10px;border-top:1px dotted #999"></div>
<div class="row" style="top:640px"><svg style="position:absolute;left:67px;top:1px" width="16" height="15" viewBox="0 0 16 15"><path d="M5 2H13L15 4V14H5Z" fill="#eef4fb" stroke="#9ab0cc" stroke-width="0.8"/><path d="M7 11H13M7 13H12" stroke="#7aa"/><rect x="0.5" y="2.5" width="13" height="7" rx="1" fill="#c81820"/><text x="7" y="8.6" font-size="6" font-family="Liberation Sans" font-weight="bold" fill="#fff" text-anchor="middle">PDF</text></svg><div style="position:absolute;left:87px;top:1px;width:118px;height:15px;background:#3399ff;border:1px dotted #113"></div><span class="t" style="left:88px;color:#fff">XT2133-x_Schematics</span></div>
<div class="row" style="top:656px"><svg style="position:absolute;left:67px;top:1px" width="16" height="15" viewBox="0 0 16 15"><path d="M5 2H13L15 4V14H5Z" fill="#eef4fb" stroke="#9ab0cc" stroke-width="0.8"/><path d="M7 11H13M7 13H12" stroke="#7aa"/><rect x="0.5" y="2.5" width="13" height="7" rx="1" fill="#c81820"/><text x="7" y="8.6" font-size="6" font-family="Liberation Sans" font-weight="bold" fill="#fff" text-anchor="middle">PDF</text></svg><span class="t" style="left:88px">XT2133-x_Component_Location</span></div>
<div class="row" style="top:672px"><svg class="fold" viewBox="0 0 14 12"><defs><linearGradient id="fg" x1="0" y1="0" x2="0" y2="1"><stop offset="0" stop-color="#fdf2b8"/><stop offset="1" stop-color="#f0cf6a"/></linearGradient></defs><path d="M0.5 1.5Q0.5 0.5 1.5 0.5H5L6.5 2H12.5Q13.5 2 13.5 3V11.5H0.5Z" fill="url(#fg)" stroke="#d9b250" stroke-width="0.8"/></svg></div>
</div>

<!-- toolbar -->
<div id="toolbar" class="abs"></div>
<!-- toolbar icons -->
<svg class="abs" style="left:262px;top:134px" width="640" height="27" viewBox="262 134 640 27">
  <!-- copy icon -->
  <path d="M269.5 141.5L271.5 139.5H279.5V154.5H269.5Z" fill="#f0d080" stroke="#cfa64a"/><path d="M271 141V154" stroke="#e0b860"/>
  <path d="M275 144.5H282L283.5 146V155.5H275Z" fill="#fff" stroke="#666" stroke-width="0.8"/>
  <path d="M276.5 148H281.5M276.5 150H281.5M276.5 152H280.5" stroke="#9ab" stroke-width="0.7"/>
  <!-- icon2 -->
  <path d="M298.5 146.5H307.5V155.5H298.5Z" fill="#fff" stroke="#b8b8b8"/>
  <path d="M292.5 142L294.5 140.5H301.5V149.5H292.5Z" fill="url(#bl)" stroke="#5f80a6"/>
  <path d="M303.5 141.5H306V145" stroke="#111" stroke-width="1.2" fill="none"/><path d="M304.5 144.5L306 146L307.5 144.5" fill="#111" stroke="#111" stroke-width="0.8"/>
  <!-- icon3 -->
  <path d="M316.5 146.5H325.5V155.5H316.5Z" fill="#fff" stroke="#b8b8b8"/>
  <path d="M322.5 140.5H330L332 142.5V149.5H322.5Z" fill="url(#bl)" stroke="#5f80a6"/>
  <path d="M320 141.5H317.5V145" stroke="#111" stroke-width="1.2" fill="none"/><path d="M316 144.5L317.5 146L319 144.5" fill="#111" stroke="#111" stroke-width="0.8"/>
  <path d="M336.5 137V159" stroke="#8a8a8a"/>
  <!-- page input -->
  <rect x="384.5" y="138.5" width="40" height="19" fill="#fff" stroke="#d6d6d6"/>
  <path d="M384.5 157.5V138.5H424" stroke="#8a8a8a" fill="none"/>
  <!-- prev/next -->
  <defs><linearGradient id="gold" x1="0" y1="0" x2="0" y2="1"><stop offset="0" stop-color="#f8e290"/><stop offset="1" stop-color="#e2b83a"/></linearGradient>
  <linearGradient id="bl" x1="0" y1="0" x2="0" y2="1"><stop offset="0" stop-color="#eaf4fc"/><stop offset="1" stop-color="#b8d8f0"/></linearGradient>
  <radialGradient id="bc" cx="0.5" cy="0.4" r="0.6"><stop offset="0" stop-color="#d8ecfa"/><stop offset="1" stop-color="#8ec2ea"/></radialGradient></defs>
  <path d="M475.5 140.5V155.5L464.5 148Z" fill="url(#gold)" stroke="#c9a03a"/>
  <path d="M490.5 140.5V155.5L501.5 148Z" fill="url(#gold)" stroke="#c9a03a"/>
  <rect x="513.5" y="140.5" width="11" height="15" fill="url(#bl)" stroke="#4a6a94"/>
  <path d="M518 145V151L515 148Z M520 145V151L523 148Z" fill="#1f5fa0"/>
  <rect x="536.5" y="140.5" width="13" height="15" fill="url(#bl)" stroke="#4a6a94"/>
  <path d="M541 145L543 143L545 145Z M541 151L543 153L545 151Z M540 146L538 148L540 150Z M546 146L548 148L546 150Z" fill="#1f5fa0"/>
  <circle cx="566.5" cy="148" r="7.3" fill="url(#bc)" stroke="#5a7a9a"/>
  <path d="M562 148H571" stroke="#1a5a9a" stroke-width="2.2"/>
  <circle cx="590.5" cy="148" r="7.3" fill="url(#bc)" stroke="#5a7a9a"/>
  <path d="M586 148H595M590.5 143.5V152.5" stroke="#1a5a9a" stroke-width="2.2"/>
  <path d="M603.5 137V158" stroke="#888"/>
  <!-- find input -->
  <rect x="646.5" y="138.5" width="159" height="20" fill="#fff" stroke="#dcdcdc"/>
  <path d="M646.5 158V138.5H805" stroke="#8a8a8a" fill="none"/>
  <path d="M812 142H819.5L827 140V156L819.5 154.5H812Z" fill="#9a9a9a"/><circle cx="817" cy="144.5" r="0.8" fill="#eee"/>
  <path d="M819 140L823 148L819 156" fill="#eee" opacity="0.0"/>
  <path d="M852 142H844.5L837 140V156L844.5 154.5H852Z" fill="#9a9a9a"/><circle cx="847" cy="144.5" r="0.8" fill="#eee"/>
  <text x="860.5" y="155" font-size="13" font-family="Liberation Sans" fill="#7a6ad8">A</text>
  <text x="867.5" y="147" font-size="9" font-family="Liberation Sans" font-weight="bold" fill="#c02a8a">a</text>
</svg>
<div class="abs" style="left:345px;top:140px;font-size:14px;color:#111">Page:</div>
<div class="abs" style="left:413px;top:140px;font-size:14px;color:#111">3</div>
<div class="abs" style="left:428px;top:140px;font-size:14px;color:#111">/ 47</div>
<div class="abs" style="left:613px;top:140px;font-size:14px;color:#111">Find:</div>
<!-- tree v scrollbar -->
<div class="abs" style="left:236px;top:141px;width:17px;height:673px;background:#fff;border:1px solid #d4d4d4"></div>
<div class="abs" style="left:236px;top:141px;width:17px;height:17px;border:1px solid #d4d4d4;background:#fff"></div>
<svg class="abs" style="left:236px;top:141px" width="17" height="17"><path d="M4.5 10.5L8.5 6.5L12.5 10.5" stroke="#555" stroke-width="1.3" fill="none"/></svg>
<div class="abs" style="left:236px;top:248px;width:17px;height:78px;background:#dadada;border:1px solid #c4c4c4"></div>
<div class="abs" style="left:241px;top:283px;width:7px;height:7px;border-top:2px solid #555;border-bottom:2px solid #555"></div>
<div class="abs" style="left:241px;top:286px;width:7px;height:1px;background:#555"></div>
<div class="abs" style="left:236px;top:797px;width:17px;height:17px;border:1px solid #d4d4d4;background:#fff"></div>
<svg class="abs" style="left:236px;top:797px" width="17" height="17"><path d="M4.5 6.5L8.5 10.5L12.5 6.5" stroke="#555" stroke-width="1.3" fill="none"/></svg>
<!-- tree h scrollbar -->
<div class="abs" style="left:0;top:814px;width:253px;height:21px;background:#f0f0f0"></div>
<div class="abs" style="left:8px;top:815px;width:228px;height:17px;background:#fff;border:1px solid #d4d4d4"></div>
<div class="abs" style="left:8px;top:815px;width:17px;height:17px;border:1px solid #d4d4d4;background:#fff"></div>
<svg class="abs" style="left:8px;top:815px" width="17" height="17"><path d="M10.5 4.5L6.5 8.5L10.5 12.5" stroke="#555" stroke-width="1.3" fill="none"/></svg>
<div class="abs" style="left:25px;top:815px;width:181px;height:17px;background:#dadada;border:1px solid #c4c4c4"></div>
<div class="abs" style="left:111px;top:820px;width:7px;height:7px;border-left:2px solid #555;border-right:2px solid #555"></div>
<div class="abs" style="left:114px;top:820px;width:1px;height:7px;background:#555"></div>
<div class="abs" style="left:219px;top:815px;width:17px;height:17px;border:1px solid #d4d4d4;background:#fff"></div>
<svg class="abs" style="left:219px;top:815px" width="17" height="17"><path d="M6.5 4.5L10.5 8.5L6.5 12.5" stroke="#555" stroke-width="1.3" fill="none"/></svg>
<!-- viewer v scrollbar -->
<div class="abs" style="left:1505px;top:161px;width:15px;height:674px;background:#fff;border-left:1px solid #e4e4e4"></div>
<svg class="abs" style="left:1505px;top:161px" width="15" height="20"><path d="M3.5 13.5L7.5 9.5L11.5 13.5" stroke="#444" stroke-width="1.3" fill="none"/></svg>
<div class="abs" style="left:1505px;top:178px;width:15px;height:1px;background:#e0e0e0"></div>
<div class="abs" style="left:1505px;top:205px;width:15px;height:16px;background:#dcdcdc;border-top:1px solid #c8c8c8;border-bottom:1px solid #c8c8c8"></div>
<div class="abs" style="left:1505px;top:816px;width:15px;height:1px;background:#e0e0e0"></div>
<svg class="abs" style="left:1505px;top:816px" width="15" height="19"><path d="M3.5 7.5L7.5 11.5L11.5 7.5" stroke="#444" stroke-width="1.3" fill="none"/></svg>

<div class="abs" style="left:261px;top:134px;width:1px;height:27px;background:#a0a0a0"></div>

<div id="viewer" class="abs"></div>
<div id="page" class="abs"></div>
<svg class="abs" style="left:0;top:0" width="1521" height="859" viewBox="0 0 1521 859">
<rect x="428.5" y="182.5" width="890" height="559" fill="none" stroke="#b4b4b4"/>
<rect x="431.5" y="185.5" width="884" height="553" fill="none" stroke="#b8b8b8"/>
<line x1="607.5" y1="182" x2="607.5" y2="186" stroke="#a0a0a0" stroke-width="1"/>
<line x1="607.5" y1="738" x2="607.5" y2="742" stroke="#a0a0a0" stroke-width="1"/>
<line x1="785.5" y1="182" x2="785.5" y2="186" stroke="#a0a0a0" stroke-width="1"/>
<line x1="785.5" y1="738" x2="785.5" y2="742" stroke="#a0a0a0" stroke-width="1"/>
<line x1="962.5" y1="182" x2="962.5" y2="186" stroke="#a0a0a0" stroke-width="1"/>
<line x1="962.5" y1="738" x2="962.5" y2="742" stroke="#a0a0a0" stroke-width="1"/>
<line x1="1138.5" y1="182" x2="1138.5" y2="186" stroke="#a0a0a0" stroke-width="1"/>
<line x1="1138.5" y1="738" x2="1138.5" y2="742" stroke="#a0a0a0" stroke-width="1"/>
<line x1="520.5" y1="183" x2="520.5" y2="186" stroke="#d0d0d0" stroke-width="1"/>
<line x1="520.5" y1="738" x2="520.5" y2="741" stroke="#d0d0d0" stroke-width="1"/>
<line x1="696.5" y1="183" x2="696.5" y2="186" stroke="#d0d0d0" stroke-width="1"/>
<line x1="696.5" y1="738" x2="696.5" y2="741" stroke="#d0d0d0" stroke-width="1"/>
<line x1="874.5" y1="183" x2="874.5" y2="186" stroke="#d0d0d0" stroke-width="1"/>
<line x1="874.5" y1="738" x2="874.5" y2="741" stroke="#d0d0d0" stroke-width="1"/>
<line x1="1050.5" y1="183" x2="1050.5" y2="186" stroke="#d0d0d0" stroke-width="1"/>
<line x1="1050.5" y1="738" x2="1050.5" y2="741" stroke="#d0d0d0" stroke-width="1"/>
<line x1="1227.5" y1="183" x2="1227.5" y2="186" stroke="#d0d0d0" stroke-width="1"/>
<line x1="1227.5" y1="738" x2="1227.5" y2="741" stroke="#d0d0d0" stroke-width="1"/>
<line x1="428" y1="255.5" x2="432" y2="255.5" stroke="#c8c8c8" stroke-width="1"/>
<line x1="1315" y1="255.5" x2="1319" y2="255.5" stroke="#c8c8c8" stroke-width="1"/>
<line x1="428" y1="323.5" x2="432" y2="323.5" stroke="#c8c8c8" stroke-width="1"/>
<line x1="1315" y1="323.5" x2="1319" y2="323.5" stroke="#c8c8c8" stroke-width="1"/>
<line x1="428" y1="374.5" x2="432" y2="374.5" stroke="#c8c8c8" stroke-width="1"/>
<line x1="1315" y1="374.5" x2="1319" y2="374.5" stroke="#c8c8c8" stroke-width="1"/>
<line x1="428" y1="426.5" x2="432" y2="426.5" stroke="#c8c8c8" stroke-width="1"/>
<line x1="1315" y1="426.5" x2="1319" y2="426.5" stroke="#c8c8c8" stroke-width="1"/>
<line x1="428" y1="480.5" x2="432" y2="480.5" stroke="#c8c8c8" stroke-width="1"/>
<line x1="1315" y1="480.5" x2="1319" y2="480.5" stroke="#c8c8c8" stroke-width="1"/>
<line x1="428" y1="533.5" x2="432" y2="533.5" stroke="#c8c8c8" stroke-width="1"/>
<line x1="1315" y1="533.5" x2="1319" y2="533.5" stroke="#c8c8c8" stroke-width="1"/>
<line x1="428" y1="580.5" x2="432" y2="580.5" stroke="#c8c8c8" stroke-width="1"/>
<line x1="1315" y1="580.5" x2="1319" y2="580.5" stroke="#c8c8c8" stroke-width="1"/>
<line x1="428" y1="632.5" x2="432" y2="632.5" stroke="#c8c8c8" stroke-width="1"/>
<line x1="1315" y1="632.5" x2="1319" y2="632.5" stroke="#c8c8c8" stroke-width="1"/>
<line x1="639" y1="229.5" x2="735.5" y2="229.5" stroke="#bc909e" stroke-width="1"/>
<line x1="735.5" y1="229.5" x2="735.5" y2="254.5" stroke="#bc909e" stroke-width="1"/>
<line x1="735.5" y1="254.5" x2="746" y2="254.5" stroke="#bc909e" stroke-width="1"/>
<line x1="639" y1="235.5" x2="726.5" y2="235.5" stroke="#bc909e" stroke-width="1"/>
<line x1="726.5" y1="235.5" x2="726.5" y2="263.5" stroke="#bc909e" stroke-width="1"/>
<line x1="726.5" y1="263.5" x2="746" y2="263.5" stroke="#bc909e" stroke-width="1"/>
<text x="605" y="231.5" font-size="3.6" fill="#e86a6a" font-family="Liberation Sans" font-weight="bold">1V1V8</text>
<text x="622" y="231.5" font-size="3.4" fill="#e86a6a" font-family="Liberation Sans">VIO_PMU_2V</text>
<path d="M638 228.0L640.5 230.0L638 232.0" stroke="#e86a6a" stroke-width="0.6" fill="none"/>
<text x="605" y="237.5" font-size="3.6" fill="#e86a6a" font-family="Liberation Sans" font-weight="bold">1V1V8</text>
<text x="622" y="237.5" font-size="3.4" fill="#e86a6a" font-family="Liberation Sans">VIO_PMU_2V</text>
<path d="M638 234.0L640.5 236.0L638 238.0" stroke="#e86a6a" stroke-width="0.6" fill="none"/>
<line x1="651.5" y1="214" x2="651.5" y2="257" stroke="#9a8a96" stroke-width="1"/>
<text transform="translate(655.2,255) rotate(-90)" font-size="2.9" fill="#6a5a6a" font-family="Liberation Sans">C651  4.7uF  0201  X5R  6.3V</text>
<text transform="translate(650.2,255) rotate(-90)" font-size="2.6" fill="#8a7a90" font-family="Liberation Sans" opacity="0.8">PLACE NEAR  PIN</text>
<line x1="649" y1="248.5" x2="655" y2="248.5" stroke="#8a8ad0" stroke-width="0.9"/>
<line x1="649" y1="250.5" x2="655" y2="250.5" stroke="#8a8ad0" stroke-width="0.9"/>
<rect x="650" y="253" width="2.5" height="3" fill="#e89090" opacity="0.8"/>
<line x1="647" y1="253.5" x2="652" y2="253.5" stroke="#807080" stroke-width="1.0"/>
<circle cx="651.5" cy="214.5" r="0.9" fill="#704050"/>
<line x1="679.5" y1="219" x2="679.5" y2="262" stroke="#9a8a96" stroke-width="1"/>
<text transform="translate(683.2,260) rotate(-90)" font-size="2.9" fill="#6a5a6a" font-family="Liberation Sans">C679  4.7uF  0201  X5R  6.3V</text>
<text transform="translate(678.2,260) rotate(-90)" font-size="2.6" fill="#8a7a90" font-family="Liberation Sans" opacity="0.8">PLACE NEAR  PIN</text>
<line x1="677" y1="250.5" x2="683" y2="250.5" stroke="#8a8ad0" stroke-width="0.9"/>
<line x1="677" y1="252.5" x2="683" y2="252.5" stroke="#8a8ad0" stroke-width="0.9"/>
<rect x="678" y="255" width="2.5" height="3" fill="#e89090" opacity="0.8"/>
<line x1="675" y1="258.5" x2="680" y2="258.5" stroke="#807080" stroke-width="1.0"/>
<circle cx="679.5" cy="219.5" r="0.9" fill="#704050"/>
<line x1="706.5" y1="222" x2="706.5" y2="262" stroke="#9a8a96" stroke-width="1"/>
<text transform="translate(710.2,260) rotate(-90)" font-size="2.9" fill="#6a5a6a" font-family="Liberation Sans">C706  4.7uF  0201  X5R  6.3V</text>
<text transform="translate(705.2,260) rotate(-90)" font-size="2.6" fill="#8a7a90" font-family="Liberation Sans" opacity="0.8">PLACE NEAR  PIN</text>
<line x1="704" y1="252.5" x2="710" y2="252.5" stroke="#8a8ad0" stroke-width="0.9"/>
<line x1="704" y1="254.5" x2="710" y2="254.5" stroke="#8a8ad0" stroke-width="0.9"/>
<rect x="705" y="257" width="2.5" height="3" fill="#e89090" opacity="0.8"/>
<line x1="702" y1="258.5" x2="707" y2="258.5" stroke="#807080" stroke-width="1.0"/>
<circle cx="706.5" cy="222.5" r="0.9" fill="#704050"/>
<line x1="630" y1="265.5" x2="723.5" y2="265.5" stroke="#bc909e" stroke-width="1"/>
<line x1="723.5" y1="265.5" x2="723.5" y2="276.5" stroke="#bc909e" stroke-width="1"/>
<line x1="723.5" y1="276.5" x2="746" y2="276.5" stroke="#bc909e" stroke-width="1"/>
<line x1="630" y1="271.5" x2="717.5" y2="271.5" stroke="#bc909e" stroke-width="1"/>
<line x1="717.5" y1="271.5" x2="717.5" y2="285.5" stroke="#bc909e" stroke-width="1"/>
<line x1="717.5" y1="285.5" x2="746" y2="285.5" stroke="#bc909e" stroke-width="1"/>
<line x1="630" y1="276.5" x2="712.5" y2="276.5" stroke="#bc909e" stroke-width="1"/>
<line x1="712.5" y1="276.5" x2="712.5" y2="293.5" stroke="#bc909e" stroke-width="1"/>
<line x1="712.5" y1="293.5" x2="746" y2="293.5" stroke="#bc909e" stroke-width="1"/>
<line x1="630.5" y1="265" x2="630.5" y2="277" stroke="#bc909e" stroke-width="1"/>
<text x="590" y="267.5" font-size="3.6" fill="#e86a6a" font-family="Liberation Sans" font-weight="bold">1V8</text>
<text x="612" y="267.5" font-size="3.4" fill="#e86a6a" font-family="Liberation Sans">VIO18_PMU</text>
<path d="M628 264.0L630.5 266.0L628 268.0" stroke="#e86a6a" stroke-width="0.6" fill="none"/>
<line x1="642.5" y1="262" x2="642.5" y2="312" stroke="#9a8a96" stroke-width="1"/>
<text transform="translate(646.2,310) rotate(-90)" font-size="2.9" fill="#6a5a6a" font-family="Liberation Sans">C642  4.7uF  0201  X5R  6.3V</text>
<text transform="translate(641.2,310) rotate(-90)" font-size="2.6" fill="#8a7a90" font-family="Liberation Sans" opacity="0.8">PLACE NEAR  PIN</text>
<line x1="640" y1="292.5" x2="646" y2="292.5" stroke="#8a8ad0" stroke-width="0.9"/>
<line x1="640" y1="294.5" x2="646" y2="294.5" stroke="#8a8ad0" stroke-width="0.9"/>
<rect x="641" y="297" width="2.5" height="3" fill="#e89090" opacity="0.8"/>
<line x1="638" y1="308.5" x2="643" y2="308.5" stroke="#807080" stroke-width="1.0"/>
<circle cx="642.5" cy="262.5" r="0.9" fill="#704050"/>
<line x1="667.5" y1="262" x2="667.5" y2="312" stroke="#9a8a96" stroke-width="1"/>
<text transform="translate(671.2,310) rotate(-90)" font-size="2.9" fill="#6a5a6a" font-family="Liberation Sans">C667  4.7uF  0201  X5R  6.3V</text>
<text transform="translate(666.2,310) rotate(-90)" font-size="2.6" fill="#8a7a90" font-family="Liberation Sans" opacity="0.8">PLACE NEAR  PIN</text>
<line x1="665" y1="292.5" x2="671" y2="292.5" stroke="#8a8ad0" stroke-width="0.9"/>
<line x1="665" y1="294.5" x2="671" y2="294.5" stroke="#8a8ad0" stroke-width="0.9"/>
<rect x="666" y="297" width="2.5" height="3" fill="#e89090" opacity="0.8"/>
<line x1="663" y1="308.5" x2="668" y2="308.5" stroke="#807080" stroke-width="1.0"/>
<circle cx="667.5" cy="262.5" r="0.9" fill="#704050"/>
<line x1="692.5" y1="258" x2="692.5" y2="312" stroke="#9a8a96" stroke-width="1"/>
<text transform="translate(696.2,310) rotate(-90)" font-size="2.9" fill="#6a5a6a" font-family="Liberation Sans">C692  4.7uF  0201  X5R  6.3V</text>
<text transform="translate(691.2,310) rotate(-90)" font-size="2.6" fill="#8a7a90" font-family="Liberation Sans" opacity="0.8">PLACE NEAR  PIN</text>
<line x1="690" y1="300.5" x2="696" y2="300.5" stroke="#8a8ad0" stroke-width="0.9"/>
<line x1="690" y1="302.5" x2="696" y2="302.5" stroke="#8a8ad0" stroke-width="0.9"/>
<rect x="691" y="305" width="2.5" height="3" fill="#e89090" opacity="0.8"/>
<line x1="688" y1="308.5" x2="693" y2="308.5" stroke="#807080" stroke-width="1.0"/>
<circle cx="692.5" cy="258.5" r="0.9" fill="#704050"/>
<line x1="639" y1="315.5" x2="746" y2="315.5" stroke="#bc909e" stroke-width="1"/>
<text x="590" y="317.5" font-size="3.6" fill="#e86a6a" font-family="Liberation Sans" font-weight="bold">1V8</text>
<text x="622" y="317.5" font-size="3.4" fill="#e86a6a" font-family="Liberation Sans">AVDD18_AUX</text>
<path d="M638 314.0L640.5 316.0L638 318.0" stroke="#e86a6a" stroke-width="0.6" fill="none"/>
<line x1="684.5" y1="307" x2="684.5" y2="386" stroke="#9a8a96" stroke-width="1"/>
<text transform="translate(688.2,384) rotate(-90)" font-size="2.9" fill="#6a5a6a" font-family="Liberation Sans">C684  4.7uF  0201  X5R  6.3V</text>
<text transform="translate(683.2,384) rotate(-90)" font-size="2.6" fill="#8a7a90" font-family="Liberation Sans" opacity="0.8">PLACE NEAR  PIN</text>
<line x1="682" y1="335.5" x2="688" y2="335.5" stroke="#8a8ad0" stroke-width="0.9"/>
<line x1="682" y1="337.5" x2="688" y2="337.5" stroke="#8a8ad0" stroke-width="0.9"/>
<rect x="683" y="340" width="2.5" height="3" fill="#e89090" opacity="0.8"/>
<circle cx="684.5" cy="307.5" r="0.9" fill="#704050"/>
<line x1="639" y1="345.5" x2="746" y2="345.5" stroke="#bc909e" stroke-width="1"/>
<text x="601" y="347.5" font-size="3.6" fill="#e86a6a" font-family="Liberation Sans" font-weight="bold">1V1V8</text>
<text x="622" y="347.5" font-size="3.4" fill="#e86a6a" font-family="Liberation Sans">VIO_PMU</text>
<path d="M638 344.0L640.5 346.0L638 348.0" stroke="#e86a6a" stroke-width="0.6" fill="none"/>
<line x1="639" y1="351.5" x2="746" y2="351.5" stroke="#bc909e" stroke-width="1"/>
<text x="590" y="353.5" font-size="3.6" fill="#e86a6a" font-family="Liberation Sans" font-weight="bold">1V8</text>
<text x="622" y="353.5" font-size="3.4" fill="#e86a6a" font-family="Liberation Sans">AVDD18_AUX</text>
<path d="M638 350.0L640.5 352.0L638 354.0" stroke="#e86a6a" stroke-width="0.6" fill="none"/>
<line x1="715.5" y1="342" x2="715.5" y2="386" stroke="#9a8a96" stroke-width="1"/>
<text transform="translate(719.2,384) rotate(-90)" font-size="2.9" fill="#6a5a6a" font-family="Liberation Sans">C715  4.7uF  0201  X5R  6.3V</text>
<text transform="translate(714.2,384) rotate(-90)" font-size="2.6" fill="#8a7a90" font-family="Liberation Sans" opacity="0.8">PLACE NEAR  PIN</text>
<line x1="713" y1="365.5" x2="719" y2="365.5" stroke="#8a8ad0" stroke-width="0.9"/>
<line x1="713" y1="367.5" x2="719" y2="367.5" stroke="#8a8ad0" stroke-width="0.9"/>
<rect x="714" y="370" width="2.5" height="3" fill="#e89090" opacity="0.8"/>
<circle cx="715.5" cy="342.5" r="0.9" fill="#704050"/>
<line x1="630" y1="384.5" x2="746" y2="384.5" stroke="#bc909e" stroke-width="1"/>
<line x1="630" y1="390.5" x2="746" y2="390.5" stroke="#bc909e" stroke-width="1"/>
<line x1="630" y1="396.5" x2="746" y2="396.5" stroke="#bc909e" stroke-width="1"/>
<line x1="630" y1="401.5" x2="746" y2="401.5" stroke="#bc909e" stroke-width="1"/>
<line x1="630" y1="407.5" x2="746" y2="407.5" stroke="#bc909e" stroke-width="1"/>
<line x1="630.5" y1="384" x2="630.5" y2="407" stroke="#bc909e" stroke-width="1"/>
<text x="589" y="386.5" font-size="3.6" fill="#e86a6a" font-family="Liberation Sans" font-weight="bold">1V8</text>
<text x="607" y="386.5" font-size="3.4" fill="#e86a6a" font-family="Liberation Sans">VIO18_PMU_IO</text>
<path d="M623 383.0L625.5 385.0L623 387.0" stroke="#e86a6a" stroke-width="0.6" fill="none"/>
<line x1="644.5" y1="384" x2="644.5" y2="432" stroke="#9a8a96" stroke-width="1"/>
<text transform="translate(648.2,430) rotate(-90)" font-size="2.9" fill="#6a5a6a" font-family="Liberation Sans">C644  4.7uF  0201  X5R  6.3V</text>
<text transform="translate(643.2,430) rotate(-90)" font-size="2.6" fill="#8a7a90" font-family="Liberation Sans" opacity="0.8">PLACE NEAR  PIN</text>
<line x1="642" y1="410.5" x2="648" y2="410.5" stroke="#8a8ad0" stroke-width="0.9"/>
<line x1="642" y1="412.5" x2="648" y2="412.5" stroke="#8a8ad0" stroke-width="0.9"/>
<rect x="643" y="415" width="2.5" height="3" fill="#e89090" opacity="0.8"/>
<line x1="640" y1="428.5" x2="645" y2="428.5" stroke="#807080" stroke-width="1.0"/>
<circle cx="644.5" cy="384.5" r="0.9" fill="#704050"/>
<line x1="658.5" y1="390" x2="658.5" y2="434" stroke="#9a8a96" stroke-width="1"/>
<text transform="translate(662.2,432) rotate(-90)" font-size="2.9" fill="#6a5a6a" font-family="Liberation Sans">C658  4.7uF  0201  X5R  6.3V</text>
<text transform="translate(657.2,432) rotate(-90)" font-size="2.6" fill="#8a7a90" font-family="Liberation Sans" opacity="0.8">PLACE NEAR  PIN</text>
<line x1="656" y1="412.5" x2="662" y2="412.5" stroke="#8a8ad0" stroke-width="0.9"/>
<line x1="656" y1="414.5" x2="662" y2="414.5" stroke="#8a8ad0" stroke-width="0.9"/>
<rect x="657" y="417" width="2.5" height="3" fill="#e89090" opacity="0.8"/>
<line x1="654" y1="430.5" x2="659" y2="430.5" stroke="#807080" stroke-width="1.0"/>
<circle cx="658.5" cy="390.5" r="0.9" fill="#704050"/>
<line x1="675.5" y1="395" x2="675.5" y2="434" stroke="#9a8a96" stroke-width="1"/>
<text transform="translate(679.2,432) rotate(-90)" font-size="2.9" fill="#6a5a6a" font-family="Liberation Sans">C675  4.7uF  0201  X5R  6.3V</text>
<text transform="translate(674.2,432) rotate(-90)" font-size="2.6" fill="#8a7a90" font-family="Liberation Sans" opacity="0.8">PLACE NEAR  PIN</text>
<line x1="673" y1="412.5" x2="679" y2="412.5" stroke="#8a8ad0" stroke-width="0.9"/>
<line x1="673" y1="414.5" x2="679" y2="414.5" stroke="#8a8ad0" stroke-width="0.9"/>
<rect x="674" y="417" width="2.5" height="3" fill="#e89090" opacity="0.8"/>
<line x1="671" y1="430.5" x2="676" y2="430.5" stroke="#807080" stroke-width="1.0"/>
<circle cx="675.5" cy="395.5" r="0.9" fill="#704050"/>
<line x1="689.5" y1="395" x2="689.5" y2="436" stroke="#9a8a96" stroke-width="1"/>
<text transform="translate(693.2,434) rotate(-90)" font-size="2.9" fill="#6a5a6a" font-family="Liberation Sans">C689  4.7uF  0201  X5R  6.3V</text>
<text transform="translate(688.2,434) rotate(-90)" font-size="2.6" fill="#8a7a90" font-family="Liberation Sans" opacity="0.8">PLACE NEAR  PIN</text>
<line x1="687" y1="412.5" x2="693" y2="412.5" stroke="#8a8ad0" stroke-width="0.9"/>
<line x1="687" y1="414.5" x2="693" y2="414.5" stroke="#8a8ad0" stroke-width="0.9"/>
<rect x="688" y="417" width="2.5" height="3" fill="#e89090" opacity="0.8"/>
<line x1="685" y1="432.5" x2="690" y2="432.5" stroke="#807080" stroke-width="1.0"/>
<circle cx="689.5" cy="395.5" r="0.9" fill="#704050"/>
<line x1="703.5" y1="395" x2="703.5" y2="436" stroke="#9a8a96" stroke-width="1"/>
<text transform="translate(707.2,434) rotate(-90)" font-size="2.9" fill="#6a5a6a" font-family="Liberation Sans">C703  4.7uF  0201  X5R  6.3V</text>
<text transform="translate(702.2,434) rotate(-90)" font-size="2.6" fill="#8a7a90" font-family="Liberation Sans" opacity="0.8">PLACE NEAR  PIN</text>
<line x1="701" y1="412.5" x2="707" y2="412.5" stroke="#8a8ad0" stroke-width="0.9"/>
<line x1="701" y1="414.5" x2="707" y2="414.5" stroke="#8a8ad0" stroke-width="0.9"/>
<rect x="702" y="417" width="2.5" height="3" fill="#e89090" opacity="0.8"/>
<line x1="699" y1="432.5" x2="704" y2="432.5" stroke="#807080" stroke-width="1.0"/>
<circle cx="703.5" cy="395.5" r="0.9" fill="#704050"/>
<line x1="717.5" y1="395" x2="717.5" y2="438" stroke="#9a8a96" stroke-width="1"/>
<text transform="translate(721.2,436) rotate(-90)" font-size="2.9" fill="#6a5a6a" font-family="Liberation Sans">C717  4.7uF  0201  X5R  6.3V</text>
<text transform="translate(716.2,436) rotate(-90)" font-size="2.6" fill="#8a7a90" font-family="Liberation Sans" opacity="0.8">PLACE NEAR  PIN</text>
<line x1="715" y1="413.5" x2="721" y2="413.5" stroke="#8a8ad0" stroke-width="0.9"/>
<line x1="715" y1="415.5" x2="721" y2="415.5" stroke="#8a8ad0" stroke-width="0.9"/>
<rect x="716" y="418" width="2.5" height="3" fill="#e89090" opacity="0.8"/>
<line x1="713" y1="434.5" x2="718" y2="434.5" stroke="#807080" stroke-width="1.0"/>
<circle cx="717.5" cy="395.5" r="0.9" fill="#704050"/>
<text x="618" y="414" font-size="3.4" fill="#f0a060" >1V1V8</text>
<line x1="625" y1="440.5" x2="746" y2="440.5" stroke="#bc909e" stroke-width="1"/>
<text x="590" y="441.5" font-size="3.6" fill="#e86a6a" font-family="Liberation Sans" font-weight="bold">1V8</text>
<text x="608" y="441.5" font-size="3.4" fill="#e86a6a" font-family="Liberation Sans">VIO18_PMU_APDR</text>
<path d="M624 438.0L626.5 440.0L624 442.0" stroke="#e86a6a" stroke-width="0.6" fill="none"/>
<line x1="625" y1="451.5" x2="746" y2="451.5" stroke="#bc909e" stroke-width="1"/>
<text x="590" y="453" font-size="3.6" fill="#e86a6a" font-family="Liberation Sans" font-weight="bold">1V8</text>
<text x="608" y="453" font-size="3.4" fill="#e86a6a" font-family="Liberation Sans">VIO18_PMU_IOS</text>
<path d="M624 449.5L626.5 451.5L624 453.5" stroke="#e86a6a" stroke-width="0.6" fill="none"/>
<line x1="625" y1="457.5" x2="746" y2="457.5" stroke="#bc909e" stroke-width="1"/>
<text x="590" y="458.5" font-size="3.6" fill="#e86a6a" font-family="Liberation Sans" font-weight="bold">1V8</text>
<text x="608" y="458.5" font-size="3.4" fill="#e86a6a" font-family="Liberation Sans">VIO_PMU</text>
<path d="M624 455.0L626.5 457.0L624 459.0" stroke="#e86a6a" stroke-width="0.6" fill="none"/>
<line x1="625" y1="468.5" x2="746" y2="468.5" stroke="#bc909e" stroke-width="1"/>
<text x="590" y="469.5" font-size="3.6" fill="#e86a6a" font-family="Liberation Sans" font-weight="bold">1V8</text>
<text x="608" y="469.5" font-size="3.4" fill="#e86a6a" font-family="Liberation Sans">VIO18_PMU_IO</text>
<path d="M624 466.0L626.5 468.0L624 470.0" stroke="#e86a6a" stroke-width="0.6" fill="none"/>
<line x1="625" y1="473.5" x2="746" y2="473.5" stroke="#bc909e" stroke-width="1"/>
<text x="590" y="475" font-size="3.6" fill="#e86a6a" font-family="Liberation Sans" font-weight="bold">1V8</text>
<text x="608" y="475" font-size="3.4" fill="#e86a6a" font-family="Liberation Sans">VIO18_PMU_IO</text>
<path d="M624 471.5L626.5 473.5L624 475.5" stroke="#e86a6a" stroke-width="0.6" fill="none"/>
<line x1="650.5" y1="440" x2="650.5" y2="500" stroke="#9a8a96" stroke-width="1"/>
<text transform="translate(654.2,498) rotate(-90)" font-size="2.9" fill="#6a5a6a" font-family="Liberation Sans">C650  4.7uF  0201  X5R  6.3V</text>
<text transform="translate(649.2,498) rotate(-90)" font-size="2.6" fill="#8a7a90" font-family="Liberation Sans" opacity="0.8">PLACE NEAR  PIN</text>
<line x1="648" y1="478.5" x2="654" y2="478.5" stroke="#8a8ad0" stroke-width="0.9"/>
<line x1="648" y1="480.5" x2="654" y2="480.5" stroke="#8a8ad0" stroke-width="0.9"/>
<rect x="649" y="483" width="2.5" height="3" fill="#e89090" opacity="0.8"/>
<line x1="646" y1="496.5" x2="651" y2="496.5" stroke="#807080" stroke-width="1.0"/>
<circle cx="650.5" cy="440.5" r="0.9" fill="#704050"/>
<line x1="666.5" y1="451" x2="666.5" y2="497" stroke="#9a8a96" stroke-width="1"/>
<text transform="translate(670.2,495) rotate(-90)" font-size="2.9" fill="#6a5a6a" font-family="Liberation Sans">C666  4.7uF  0201  X5R  6.3V</text>
<text transform="translate(665.2,495) rotate(-90)" font-size="2.6" fill="#8a7a90" font-family="Liberation Sans" opacity="0.8">PLACE NEAR  PIN</text>
<line x1="664" y1="478.5" x2="670" y2="478.5" stroke="#8a8ad0" stroke-width="0.9"/>
<line x1="664" y1="480.5" x2="670" y2="480.5" stroke="#8a8ad0" stroke-width="0.9"/>
<rect x="665" y="483" width="2.5" height="3" fill="#e89090" opacity="0.8"/>
<line x1="662" y1="493.5" x2="667" y2="493.5" stroke="#807080" stroke-width="1.0"/>
<circle cx="666.5" cy="451.5" r="0.9" fill="#704050"/>
<line x1="680.5" y1="456" x2="680.5" y2="500" stroke="#9a8a96" stroke-width="1"/>
<text transform="translate(684.2,498) rotate(-90)" font-size="2.9" fill="#6a5a6a" font-family="Liberation Sans">C680  4.7uF  0201  X5R  6.3V</text>
<text transform="translate(679.2,498) rotate(-90)" font-size="2.6" fill="#8a7a90" font-family="Liberation Sans" opacity="0.8">PLACE NEAR  PIN</text>
<line x1="678" y1="480.5" x2="684" y2="480.5" stroke="#8a8ad0" stroke-width="0.9"/>
<line x1="678" y1="482.5" x2="684" y2="482.5" stroke="#8a8ad0" stroke-width="0.9"/>
<rect x="679" y="485" width="2.5" height="3" fill="#e89090" opacity="0.8"/>
<line x1="676" y1="496.5" x2="681" y2="496.5" stroke="#807080" stroke-width="1.0"/>
<circle cx="680.5" cy="456.5" r="0.9" fill="#704050"/>
<line x1="695.5" y1="456" x2="695.5" y2="500" stroke="#9a8a96" stroke-width="1"/>
<text transform="translate(699.2,498) rotate(-90)" font-size="2.9" fill="#6a5a6a" font-family="Liberation Sans">C695  4.7uF  0201  X5R  6.3V</text>
<text transform="translate(694.2,498) rotate(-90)" font-size="2.6" fill="#8a7a90" font-family="Liberation Sans" opacity="0.8">PLACE NEAR  PIN</text>
<line x1="693" y1="480.5" x2="699" y2="480.5" stroke="#8a8ad0" stroke-width="0.9"/>
<line x1="693" y1="482.5" x2="699" y2="482.5" stroke="#8a8ad0" stroke-width="0.9"/>
<rect x="694" y="485" width="2.5" height="3" fill="#e89090" opacity="0.8"/>
<line x1="691" y1="496.5" x2="696" y2="496.5" stroke="#807080" stroke-width="1.0"/>
<circle cx="695.5" cy="456.5" r="0.9" fill="#704050"/>
<line x1="708.5" y1="460" x2="708.5" y2="500" stroke="#9a8a96" stroke-width="1"/>
<text transform="translate(712.2,498) rotate(-90)" font-size="2.9" fill="#6a5a6a" font-family="Liberation Sans">C708  4.7uF  0201  X5R  6.3V</text>
<text transform="translate(707.2,498) rotate(-90)" font-size="2.6" fill="#8a7a90" font-family="Liberation Sans" opacity="0.8">PLACE NEAR  PIN</text>
<line x1="706" y1="480.5" x2="712" y2="480.5" stroke="#8a8ad0" stroke-width="0.9"/>
<line x1="706" y1="482.5" x2="712" y2="482.5" stroke="#8a8ad0" stroke-width="0.9"/>
<rect x="707" y="485" width="2.5" height="3" fill="#e89090" opacity="0.8"/>
<line x1="704" y1="496.5" x2="709" y2="496.5" stroke="#807080" stroke-width="1.0"/>
<circle cx="708.5" cy="460.5" r="0.9" fill="#704050"/>
<line x1="637" y1="509.5" x2="746" y2="509.5" stroke="#bc909e" stroke-width="1"/>
<text x="600" y="511" font-size="3.6" fill="#e86a6a" font-family="Liberation Sans" font-weight="bold">1V1V8</text>
<text x="620" y="511" font-size="3.4" fill="#e86a6a" font-family="Liberation Sans">VIO_PMU</text>
<path d="M636 507.5L638.5 509.5L636 511.5" stroke="#e86a6a" stroke-width="0.6" fill="none"/>
<line x1="637" y1="514.5" x2="746" y2="514.5" stroke="#bc909e" stroke-width="1"/>
<text x="600" y="516" font-size="3.6" fill="#e86a6a" font-family="Liberation Sans" font-weight="bold">1V1V8</text>
<text x="620" y="516" font-size="3.4" fill="#e86a6a" font-family="Liberation Sans">VIO_PMU</text>
<path d="M636 512.5L638.5 514.5L636 516.5" stroke="#e86a6a" stroke-width="0.6" fill="none"/>
<line x1="680.5" y1="500" x2="680.5" y2="537" stroke="#9a8a96" stroke-width="1"/>
<text transform="translate(684.2,535) rotate(-90)" font-size="2.9" fill="#6a5a6a" font-family="Liberation Sans">C680  4.7uF  0201  X5R  6.3V</text>
<text transform="translate(679.2,535) rotate(-90)" font-size="2.6" fill="#8a7a90" font-family="Liberation Sans" opacity="0.8">PLACE NEAR  PIN</text>
<line x1="678" y1="525.5" x2="684" y2="525.5" stroke="#8a8ad0" stroke-width="0.9"/>
<line x1="678" y1="527.5" x2="684" y2="527.5" stroke="#8a8ad0" stroke-width="0.9"/>
<rect x="679" y="530" width="2.5" height="3" fill="#e89090" opacity="0.8"/>
<line x1="676" y1="533.5" x2="681" y2="533.5" stroke="#807080" stroke-width="1.0"/>
<circle cx="680.5" cy="500.5" r="0.9" fill="#704050"/>
<line x1="694.5" y1="500" x2="694.5" y2="537" stroke="#9a8a96" stroke-width="1"/>
<text transform="translate(698.2,535) rotate(-90)" font-size="2.9" fill="#6a5a6a" font-family="Liberation Sans">C694  4.7uF  0201  X5R  6.3V</text>
<text transform="translate(693.2,535) rotate(-90)" font-size="2.6" fill="#8a7a90" font-family="Liberation Sans" opacity="0.8">PLACE NEAR  PIN</text>
<line x1="692" y1="525.5" x2="698" y2="525.5" stroke="#8a8ad0" stroke-width="0.9"/>
<line x1="692" y1="527.5" x2="698" y2="527.5" stroke="#8a8ad0" stroke-width="0.9"/>
<rect x="693" y="530" width="2.5" height="3" fill="#e89090" opacity="0.8"/>
<line x1="690" y1="533.5" x2="695" y2="533.5" stroke="#807080" stroke-width="1.0"/>
<circle cx="694.5" cy="500.5" r="0.9" fill="#704050"/>
<line x1="637" y1="537.5" x2="746" y2="537.5" stroke="#bc909e" stroke-width="1"/>
<text x="601" y="538.5" font-size="3.6" fill="#e86a6a" font-family="Liberation Sans" font-weight="bold">1V1V8</text>
<text x="620" y="538.5" font-size="3.4" fill="#e86a6a" font-family="Liberation Sans">VIO18_PMU</text>
<path d="M636 535.0L638.5 537.0L636 539.0" stroke="#e86a6a" stroke-width="0.6" fill="none"/>
<line x1="694.5" y1="537" x2="694.5" y2="558" stroke="#9a8a96" stroke-width="1"/>
<line x1="692" y1="545.5" x2="697" y2="545.5" stroke="#7474d8" stroke-width="1"/>
<line x1="692" y1="547.5" x2="697" y2="547.5" stroke="#7474d8" stroke-width="1"/>
<text x="697" y="549.5" font-size="3.3" fill="#706070" font-family="Liberation Sans">C181  0.1nF  0201  X7R</text>
<line x1="692" y1="553.5" x2="697" y2="553.5" stroke="#e86a6a" stroke-width="1"/>
<line x1="693" y1="555.5" x2="696" y2="555.5" stroke="#e86a6a" stroke-width="1"/>
<text x="690" y="562" font-size="3" fill="#606060" >GND</text>
<text x="739" y="253.9" font-size="2.8" fill="#8a5a60" font-family="Liberation Sans">AB12</text>
<text x="748" y="255.7" font-size="2.9" fill="#7a88b0" font-family="Liberation Sans">AVDD18_MD</text>
<text x="739" y="262.9" font-size="2.8" fill="#8a5a60" font-family="Liberation Sans">AB12</text>
<text x="748" y="264.7" font-size="2.9" fill="#7a88b0" font-family="Liberation Sans">AVDD18_MD</text>
<text x="739" y="275.9" font-size="2.8" fill="#8a5a60" font-family="Liberation Sans">AB12</text>
<text x="748" y="277.7" font-size="2.9" fill="#7a88b0" font-family="Liberation Sans">AVDD18_MD</text>
<text x="739" y="284.9" font-size="2.8" fill="#8a5a60" font-family="Liberation Sans">AB12</text>
<text x="748" y="286.7" font-size="2.9" fill="#7a88b0" font-family="Liberation Sans">AVDD18_MD</text>
<text x="739" y="292.9" font-size="2.8" fill="#8a5a60" font-family="Liberation Sans">AB12</text>
<text x="748" y="294.7" font-size="2.9" fill="#7a88b0" font-family="Liberation Sans">AVDD18_MD</text>
<text x="739" y="314.4" font-size="2.8" fill="#8a5a60" font-family="Liberation Sans">AB12</text>
<text x="748" y="316.2" font-size="2.9" fill="#7a88b0" font-family="Liberation Sans">AVDD18_MD</text>
<text x="739" y="344.4" font-size="2.8" fill="#8a5a60" font-family="Liberation Sans">AB12</text>
<text x="748" y="346.2" font-size="2.9" fill="#7a88b0" font-family="Liberation Sans">AVDD18_MD</text>
<text x="739" y="350.4" font-size="2.8" fill="#8a5a60" font-family="Liberation Sans">AB12</text>
<text x="748" y="352.2" font-size="2.9" fill="#7a88b0" font-family="Liberation Sans">AVDD18_MD</text>
<text x="739" y="383.4" font-size="2.8" fill="#8a5a60" font-family="Liberation Sans">AB12</text>
<text x="748" y="385.2" font-size="2.9" fill="#7a88b0" font-family="Liberation Sans">AVDD18_MD</text>
<text x="739" y="389.4" font-size="2.8" fill="#8a5a60" font-family="Liberation Sans">AB12</text>
<text x="748" y="391.2" font-size="2.9" fill="#7a88b0" font-family="Liberation Sans">AVDD18_MD</text>
<text x="739" y="394.9" font-size="2.8" fill="#8a5a60" font-family="Liberation Sans">AB12</text>
<text x="748" y="396.7" font-size="2.9" fill="#7a88b0" font-family="Liberation Sans">AVDD18_MD</text>
<text x="739" y="400.4" font-size="2.8" fill="#8a5a60" font-family="Liberation Sans">AB12</text>
<text x="748" y="402.2" font-size="2.9" fill="#7a88b0" font-family="Liberation Sans">AVDD18_MD</text>
<text x="739" y="405.9" font-size="2.8" fill="#8a5a60" font-family="Liberation Sans">AB12</text>
<text x="748" y="407.7" font-size="2.9" fill="#7a88b0" font-family="Liberation Sans">AVDD18_MD</text>
<text x="739" y="438.9" font-size="2.8" fill="#8a5a60" font-family="Liberation Sans">AB12</text>
<text x="748" y="440.7" font-size="2.9" fill="#7a88b0" font-family="Liberation Sans">AVDD18_MD</text>
<text x="739" y="450.4" font-size="2.8" fill="#8a5a60" font-family="Liberation Sans">AB12</text>
<text x="748" y="452.2" font-size="2.9" fill="#7a88b0" font-family="Liberation Sans">AVDD18_MD</text>
<text x="739" y="455.9" font-size="2.8" fill="#8a5a60" font-family="Liberation Sans">AB12</text>
<text x="748" y="457.7" font-size="2.9" fill="#7a88b0" font-family="Liberation Sans">AVDD18_MD</text>
<text x="739" y="466.9" font-size="2.8" fill="#8a5a60" font-family="Liberation Sans">AB12</text>
<text x="748" y="468.7" font-size="2.9" fill="#7a88b0" font-family="Liberation Sans">AVDD18_MD</text>
<text x="739" y="472.4" font-size="2.8" fill="#8a5a60" font-family="Liberation Sans">AB12</text>
<text x="748" y="474.2" font-size="2.9" fill="#7a88b0" font-family="Liberation Sans">AVDD18_MD</text>
<text x="739" y="508.4" font-size="2.8" fill="#8a5a60" font-family="Liberation Sans">AB12</text>
<text x="748" y="510.2" font-size="2.9" fill="#7a88b0" font-family="Liberation Sans">AVDD18_MD</text>
<text x="739" y="513.4" font-size="2.8" fill="#8a5a60" font-family="Liberation Sans">AB12</text>
<text x="748" y="515.2" font-size="2.9" fill="#7a88b0" font-family="Liberation Sans">AVDD18_MD</text>
<text x="739" y="535.9" font-size="2.8" fill="#8a5a60" font-family="Liberation Sans">AB12</text>
<text x="748" y="537.7" font-size="2.9" fill="#7a88b0" font-family="Liberation Sans">AVDD18_MD</text>
<path d="M746.5 235.5H831.5V558.5H746.5Z M787.5 243V558.5 M790.5 243V558.5" stroke="#6a6ade" fill="none"/>
<rect x="747" y="243" width="40" height="6.5" fill="#eef0ff"/>
<rect x="747.5" y="243.5" width="40" height="6" fill="none" stroke="#6a6ade" stroke-width="0.8"/>
<rect x="790.5" y="243.5" width="41" height="6" fill="none" stroke="#6a6ade" stroke-width="0.8"/>
<rect x="747.5" y="329.5" width="40" height="6" fill="none" stroke="#6a6ade" stroke-width="0.8"/>
<rect x="747.5" y="368.5" width="40" height="5" fill="none" stroke="#6a6ade" stroke-width="0.8"/>
<text x="751" y="242.3" font-size="5.8" fill="#3a3ad0" font-family="Liberation Sans" font-weight="bold" letter-spacing="0.1">MT6785-SBS</text>
<text x="752" y="248.5" font-size="4.5" fill="#6a6ade" font-family="Liberation Sans">AVDD</text>
<text x="795" y="248.5" font-size="4.5" fill="#6a6ade" font-family="Liberation Sans">PERI_A</text>
<text x="752" y="334.5" font-size="4.5" fill="#6a6ade" font-family="Liberation Sans">PLL_VDD</text>
<text x="752" y="373" font-size="4.5" fill="#6a6ade" font-family="Liberation Sans">PERI_D</text>
<text x="740" y="233" font-size="3.5" fill="#9090d0" font-family="Liberation Sans">U01</text>
<line x1="790" y1="303.5" x2="793" y2="303.5" stroke="#a0a0c0" stroke-width="1"/>
<line x1="817" y1="303.5" x2="820" y2="303.5" stroke="#a0a0c0" stroke-width="1"/>
<line x1="790" y1="346.5" x2="793" y2="346.5" stroke="#a0a0c0" stroke-width="1"/>
<line x1="817" y1="346.5" x2="820" y2="346.5" stroke="#a0a0c0" stroke-width="1"/>
<line x1="790" y1="403.5" x2="793" y2="403.5" stroke="#a0a0c0" stroke-width="1"/>
<line x1="817" y1="403.5" x2="820" y2="403.5" stroke="#a0a0c0" stroke-width="1"/>
<line x1="790" y1="449.5" x2="793" y2="449.5" stroke="#a0a0c0" stroke-width="1"/>
<line x1="817" y1="449.5" x2="820" y2="449.5" stroke="#a0a0c0" stroke-width="1"/>
<line x1="790" y1="490.5" x2="793" y2="490.5" stroke="#a0a0c0" stroke-width="1"/>
<line x1="817" y1="490.5" x2="820" y2="490.5" stroke="#a0a0c0" stroke-width="1"/>
<line x1="790" y1="528.5" x2="793" y2="528.5" stroke="#a0a0c0" stroke-width="1"/>
<line x1="817" y1="528.5" x2="820" y2="528.5" stroke="#a0a0c0" stroke-width="1"/>
<line x1="832" y1="254.5" x2="932" y2="254.5" stroke="#bc909e" stroke-width="1"/>
<path d="M934 253L932 254.5L934 256" stroke="#e86a6a" stroke-width="0.6" fill="none"/>
<text x="936" y="255.8" font-size="3.0" fill="#e86a6a" font-family="Liberation Sans">AVDD_DSI</text>
<text x="955" y="255.8" font-size="3.1" fill="#e86a6a" font-family="Liberation Sans">1V1V8</text>
<text x="812" y="255.2" font-size="2.9" fill="#7a88b0" font-family="Liberation Sans">AVDD18_IO</text>
<text x="833.5" y="253.4" font-size="2.8" fill="#8a5a60" font-family="Liberation Sans">AC7</text>
<line x1="832" y1="261.5" x2="932" y2="261.5" stroke="#bc909e" stroke-width="1"/>
<path d="M934 259.5L932 261.0L934 262.5" stroke="#e86a6a" stroke-width="0.6" fill="none"/>
<text x="936" y="262.3" font-size="3.0" fill="#e86a6a" font-family="Liberation Sans">AVDD_CSI</text>
<text x="955" y="262.3" font-size="3.1" fill="#e86a6a" font-family="Liberation Sans">1V1V8</text>
<text x="812" y="261.7" font-size="2.9" fill="#7a88b0" font-family="Liberation Sans">AVDD18_IO</text>
<text x="833.5" y="259.9" font-size="2.8" fill="#8a5a60" font-family="Liberation Sans">AC7</text>
<line x1="832" y1="266.5" x2="932" y2="266.5" stroke="#bc909e" stroke-width="1"/>
<path d="M934 264.5L932 266.0L934 267.5" stroke="#e86a6a" stroke-width="0.6" fill="none"/>
<text x="936" y="267.3" font-size="3.0" fill="#e86a6a" font-family="Liberation Sans">AVDD_CSI</text>
<text x="955" y="267.3" font-size="3.1" fill="#e86a6a" font-family="Liberation Sans">1V1V8</text>
<text x="812" y="266.7" font-size="2.9" fill="#7a88b0" font-family="Liberation Sans">AVDD18_IO</text>
<text x="833.5" y="264.9" font-size="2.8" fill="#8a5a60" font-family="Liberation Sans">AC7</text>
<line x1="892.5" y1="254" x2="892.5" y2="235" stroke="#bc909e" stroke-width="1"/>
<line x1="892.5" y1="235.5" x2="912" y2="235.5" stroke="#bc909e" stroke-width="1"/>
<path d="M912 235.5l1.5-2 2 4 2-4 2 4 2-4 1.5 2H930" stroke="#6a6ad0" stroke-width="0.7" fill="none"/>
<path d="M900 254.5l1.5-2 2 4 2-4 2 4 2-4 2 4 2-4 1.5 2" stroke="#6a6ad0" stroke-width="0.7" fill="none"/>
<text x="933" y="237" font-size="3.4" fill="#e86a6a" font-family="Liberation Sans">AVDD_DSI</text>
<text x="955" y="237" font-size="3.6" fill="#e86a6a" font-family="Liberation Sans" font-weight="bold">1V1V8</text>
<text x="904" y="229.5" font-size="3.3" fill="#706070" font-family="Liberation Sans">VCLAMP_DSI_DPN_AUD</text>
<text x="946" y="251" font-size="3.0" fill="#9090c0" font-family="Liberation Sans">AVDD_DSI_LDO</text>
<rect x="912.5" y="238.5" width="33" height="10" fill="none" stroke="#e890b0" stroke-width="0.8"/>
<text x="915" y="246" font-size="5.2" fill="#d0206a" font-family="Liberation Sans" font-weight="bold">Note:  11-1</text>
<line x1="852.5" y1="250" x2="852.5" y2="293" stroke="#9a8a96" stroke-width="1"/>
<text transform="translate(856.2,291) rotate(-90)" font-size="2.9" fill="#6a5a6a" font-family="Liberation Sans">C852  4.7uF  0201  X5R  6.3V</text>
<text transform="translate(851.2,291) rotate(-90)" font-size="2.6" fill="#8a7a90" font-family="Liberation Sans" opacity="0.8">PLACE NEAR  PIN</text>
<line x1="850" y1="276.5" x2="856" y2="276.5" stroke="#8a8ad0" stroke-width="0.9"/>
<line x1="850" y1="278.5" x2="856" y2="278.5" stroke="#8a8ad0" stroke-width="0.9"/>
<rect x="851" y="281" width="2.5" height="3" fill="#e89090" opacity="0.8"/>
<line x1="848" y1="289.5" x2="853" y2="289.5" stroke="#807080" stroke-width="1.0"/>
<circle cx="852.5" cy="250.5" r="0.9" fill="#704050"/>
<line x1="869.5" y1="248" x2="869.5" y2="289" stroke="#9a8a96" stroke-width="1"/>
<text transform="translate(873.2,287) rotate(-90)" font-size="2.9" fill="#6a5a6a" font-family="Liberation Sans">C869  4.7uF  0201  X5R  6.3V</text>
<text transform="translate(868.2,287) rotate(-90)" font-size="2.6" fill="#8a7a90" font-family="Liberation Sans" opacity="0.8">PLACE NEAR  PIN</text>
<line x1="867" y1="274.5" x2="873" y2="274.5" stroke="#8a8ad0" stroke-width="0.9"/>
<line x1="867" y1="276.5" x2="873" y2="276.5" stroke="#8a8ad0" stroke-width="0.9"/>
<rect x="868" y="279" width="2.5" height="3" fill="#e89090" opacity="0.8"/>
<line x1="865" y1="285.5" x2="870" y2="285.5" stroke="#807080" stroke-width="1.0"/>
<circle cx="869.5" cy="248.5" r="0.9" fill="#704050"/>
<line x1="880.5" y1="248" x2="880.5" y2="289" stroke="#9a8a96" stroke-width="1"/>
<text transform="translate(884.2,287) rotate(-90)" font-size="2.9" fill="#6a5a6a" font-family="Liberation Sans">C880  4.7uF  0201  X5R  6.3V</text>
<text transform="translate(879.2,287) rotate(-90)" font-size="2.6" fill="#8a7a90" font-family="Liberation Sans" opacity="0.8">PLACE NEAR  PIN</text>
<line x1="878" y1="274.5" x2="884" y2="274.5" stroke="#8a8ad0" stroke-width="0.9"/>
<line x1="878" y1="276.5" x2="884" y2="276.5" stroke="#8a8ad0" stroke-width="0.9"/>
<rect x="879" y="279" width="2.5" height="3" fill="#e89090" opacity="0.8"/>
<line x1="876" y1="285.5" x2="881" y2="285.5" stroke="#807080" stroke-width="1.0"/>
<circle cx="880.5" cy="248.5" r="0.9" fill="#704050"/>
<line x1="832" y1="305.5" x2="918" y2="305.5" stroke="#bc909e" stroke-width="1"/>
<path d="M920 303.5L918 305.0L920 306.5" stroke="#e86a6a" stroke-width="0.6" fill="none"/>
<text x="922" y="306.3" font-size="3.0" fill="#e86a6a" font-family="Liberation Sans">VUSB_PMU</text>
<text x="941" y="306.3" font-size="3.1" fill="#e86a6a" font-family="Liberation Sans">1V1V8</text>
<text x="812" y="305.7" font-size="2.9" fill="#7a88b0" font-family="Liberation Sans">AVDD18_IO</text>
<text x="833.5" y="303.9" font-size="2.8" fill="#8a5a60" font-family="Liberation Sans">AC7</text>
<line x1="832" y1="310.5" x2="918" y2="310.5" stroke="#bc909e" stroke-width="1"/>
<path d="M920 309L918 310.5L920 312" stroke="#e86a6a" stroke-width="0.6" fill="none"/>
<text x="922" y="311.8" font-size="3.0" fill="#e86a6a" font-family="Liberation Sans">AVDD18_USB</text>
<text x="941" y="311.8" font-size="3.1" fill="#e86a6a" font-family="Liberation Sans">1V8</text>
<text x="812" y="311.2" font-size="2.9" fill="#7a88b0" font-family="Liberation Sans">AVDD18_IO</text>
<text x="833.5" y="309.4" font-size="2.8" fill="#8a5a60" font-family="Liberation Sans">AC7</text>
<line x1="832" y1="316.5" x2="918" y2="316.5" stroke="#bc909e" stroke-width="1"/>
<path d="M920 314.5L918 316.0L920 317.5" stroke="#e86a6a" stroke-width="0.6" fill="none"/>
<text x="922" y="317.3" font-size="3.0" fill="#e86a6a" font-family="Liberation Sans">VUSB_PMU</text>
<text x="941" y="317.3" font-size="3.1" fill="#e86a6a" font-family="Liberation Sans">1V1</text>
<text x="812" y="316.7" font-size="2.9" fill="#7a88b0" font-family="Liberation Sans">AVDD18_IO</text>
<text x="833.5" y="314.9" font-size="2.8" fill="#8a5a60" font-family="Liberation Sans">AC7</text>
<line x1="832" y1="321.5" x2="892" y2="321.5" stroke="#bc909e" stroke-width="1"/>
<line x1="892.5" y1="321.5" x2="892.5" y2="355" stroke="#bc909e" stroke-width="1"/>
<line x1="832" y1="327.5" x2="918" y2="327.5" stroke="#bc909e" stroke-width="1"/>
<path d="M920 326L918 327.5L920 329" stroke="#e86a6a" stroke-width="0.6" fill="none"/>
<text x="922" y="328.8" font-size="3.0" fill="#e86a6a" font-family="Liberation Sans">AVDD18_USB</text>
<text x="941" y="328.8" font-size="3.1" fill="#e86a6a" font-family="Liberation Sans">1V8</text>
<text x="812" y="328.2" font-size="2.9" fill="#7a88b0" font-family="Liberation Sans">AVDD18_IO</text>
<text x="833.5" y="326.4" font-size="2.8" fill="#8a5a60" font-family="Liberation Sans">AC7</text>
<text x="812" y="322.2" font-size="2.9" fill="#7a88b0" font-family="Liberation Sans">AVDD18_IO</text>
<text x="917.5" y="322.8" font-size="6.2" fill="#9a9a9a" font-family="Liberation Mono">WITHOUT   USB3.1  GEN1</text>
<line x1="852.5" y1="304" x2="852.5" y2="356" stroke="#9a8a96" stroke-width="1"/>
<text transform="translate(856.2,354) rotate(-90)" font-size="2.9" fill="#6a5a6a" font-family="Liberation Sans">C852  4.7uF  0201  X5R  6.3V</text>
<text transform="translate(851.2,354) rotate(-90)" font-size="2.6" fill="#8a7a90" font-family="Liberation Sans" opacity="0.8">PLACE NEAR  PIN</text>
<line x1="850" y1="336.5" x2="856" y2="336.5" stroke="#8a8ad0" stroke-width="0.9"/>
<line x1="850" y1="338.5" x2="856" y2="338.5" stroke="#8a8ad0" stroke-width="0.9"/>
<rect x="851" y="341" width="2.5" height="3" fill="#e89090" opacity="0.8"/>
<line x1="848" y1="352.5" x2="853" y2="352.5" stroke="#807080" stroke-width="1.0"/>
<circle cx="852.5" cy="304.5" r="0.9" fill="#704050"/>
<line x1="866.5" y1="310" x2="866.5" y2="356" stroke="#9a8a96" stroke-width="1"/>
<text transform="translate(870.2,354) rotate(-90)" font-size="2.9" fill="#6a5a6a" font-family="Liberation Sans">C866  4.7uF  0201  X5R  6.3V</text>
<text transform="translate(865.2,354) rotate(-90)" font-size="2.6" fill="#8a7a90" font-family="Liberation Sans" opacity="0.8">PLACE NEAR  PIN</text>
<line x1="864" y1="336.5" x2="870" y2="336.5" stroke="#8a8ad0" stroke-width="0.9"/>
<line x1="864" y1="338.5" x2="870" y2="338.5" stroke="#8a8ad0" stroke-width="0.9"/>
<rect x="865" y="341" width="2.5" height="3" fill="#e89090" opacity="0.8"/>
<line x1="862" y1="352.5" x2="867" y2="352.5" stroke="#807080" stroke-width="1.0"/>
<circle cx="866.5" cy="310.5" r="0.9" fill="#704050"/>
<line x1="879.5" y1="315" x2="879.5" y2="356" stroke="#9a8a96" stroke-width="1"/>
<text transform="translate(883.2,354) rotate(-90)" font-size="2.9" fill="#6a5a6a" font-family="Liberation Sans">C879  4.7uF  0201  X5R  6.3V</text>
<text transform="translate(878.2,354) rotate(-90)" font-size="2.6" fill="#8a7a90" font-family="Liberation Sans" opacity="0.8">PLACE NEAR  PIN</text>
<line x1="877" y1="336.5" x2="883" y2="336.5" stroke="#8a8ad0" stroke-width="0.9"/>
<line x1="877" y1="338.5" x2="883" y2="338.5" stroke="#8a8ad0" stroke-width="0.9"/>
<rect x="878" y="341" width="2.5" height="3" fill="#e89090" opacity="0.8"/>
<line x1="875" y1="352.5" x2="880" y2="352.5" stroke="#807080" stroke-width="1.0"/>
<circle cx="879.5" cy="315.5" r="0.9" fill="#704050"/>
<line x1="908.5" y1="320" x2="908.5" y2="356" stroke="#9a8a96" stroke-width="1"/>
<text transform="translate(912.2,354) rotate(-90)" font-size="2.9" fill="#6a5a6a" font-family="Liberation Sans">C908  4.7uF  0201  X5R  6.3V</text>
<text transform="translate(907.2,354) rotate(-90)" font-size="2.6" fill="#8a7a90" font-family="Liberation Sans" opacity="0.8">PLACE NEAR  PIN</text>
<line x1="906" y1="336.5" x2="912" y2="336.5" stroke="#8a8ad0" stroke-width="0.9"/>
<line x1="906" y1="338.5" x2="912" y2="338.5" stroke="#8a8ad0" stroke-width="0.9"/>
<rect x="907" y="341" width="2.5" height="3" fill="#e89090" opacity="0.8"/>
<line x1="904" y1="352.5" x2="909" y2="352.5" stroke="#807080" stroke-width="1.0"/>
<circle cx="908.5" cy="320.5" r="0.9" fill="#704050"/>
<line x1="832" y1="371.5" x2="904" y2="371.5" stroke="#bc909e" stroke-width="1"/>
<path d="M906 369.5L904 371.0L906 372.5" stroke="#e86a6a" stroke-width="0.6" fill="none"/>
<text x="908" y="372.3" font-size="3.0" fill="#e86a6a" font-family="Liberation Sans">AVDD_RFL</text>
<text x="927" y="372.3" font-size="3.1" fill="#e86a6a" font-family="Liberation Sans">1V1V8</text>
<text x="812" y="371.7" font-size="2.9" fill="#7a88b0" font-family="Liberation Sans">AVDD18_IO</text>
<text x="833.5" y="369.9" font-size="2.8" fill="#8a5a60" font-family="Liberation Sans">AC7</text>
<line x1="832" y1="377.5" x2="904" y2="377.5" stroke="#bc909e" stroke-width="1"/>
<path d="M906 375.5L904 377.0L906 378.5" stroke="#e86a6a" stroke-width="0.6" fill="none"/>
<text x="908" y="378.3" font-size="3.0" fill="#e86a6a" font-family="Liberation Sans">AVDD18_LDO</text>
<text x="927" y="378.3" font-size="3.1" fill="#e86a6a" font-family="Liberation Sans">1V8</text>
<text x="812" y="377.7" font-size="2.9" fill="#7a88b0" font-family="Liberation Sans">AVDD18_IO</text>
<text x="833.5" y="375.9" font-size="2.8" fill="#8a5a60" font-family="Liberation Sans">AC7</text>
<line x1="861.5" y1="358" x2="861.5" y2="406" stroke="#9a8a96" stroke-width="1"/>
<text transform="translate(865.2,404) rotate(-90)" font-size="2.9" fill="#6a5a6a" font-family="Liberation Sans">C861  4.7uF  0201  X5R  6.3V</text>
<text transform="translate(860.2,404) rotate(-90)" font-size="2.6" fill="#8a7a90" font-family="Liberation Sans" opacity="0.8">PLACE NEAR  PIN</text>
<line x1="859" y1="386.5" x2="865" y2="386.5" stroke="#8a8ad0" stroke-width="0.9"/>
<line x1="859" y1="388.5" x2="865" y2="388.5" stroke="#8a8ad0" stroke-width="0.9"/>
<rect x="860" y="391" width="2.5" height="3" fill="#e89090" opacity="0.8"/>
<line x1="857" y1="402.5" x2="862" y2="402.5" stroke="#807080" stroke-width="1.0"/>
<circle cx="861.5" cy="358.5" r="0.9" fill="#704050"/>
<line x1="877.5" y1="358" x2="877.5" y2="406" stroke="#9a8a96" stroke-width="1"/>
<text transform="translate(881.2,404) rotate(-90)" font-size="2.9" fill="#6a5a6a" font-family="Liberation Sans">C877  4.7uF  0201  X5R  6.3V</text>
<text transform="translate(876.2,404) rotate(-90)" font-size="2.6" fill="#8a7a90" font-family="Liberation Sans" opacity="0.8">PLACE NEAR  PIN</text>
<line x1="875" y1="386.5" x2="881" y2="386.5" stroke="#8a8ad0" stroke-width="0.9"/>
<line x1="875" y1="388.5" x2="881" y2="388.5" stroke="#8a8ad0" stroke-width="0.9"/>
<rect x="876" y="391" width="2.5" height="3" fill="#e89090" opacity="0.8"/>
<line x1="873" y1="402.5" x2="878" y2="402.5" stroke="#807080" stroke-width="1.0"/>
<circle cx="877.5" cy="358.5" r="0.9" fill="#704050"/>
<line x1="832" y1="420.5" x2="904" y2="420.5" stroke="#bc909e" stroke-width="1"/>
<path d="M906 419L904 420.5L906 422" stroke="#e86a6a" stroke-width="0.6" fill="none"/>
<text x="908" y="421.8" font-size="3.0" fill="#e86a6a" font-family="Liberation Sans">VIO18_PMU</text>
<text x="927" y="421.8" font-size="3.1" fill="#e86a6a" font-family="Liberation Sans">1V8</text>
<text x="812" y="421.2" font-size="2.9" fill="#7a88b0" font-family="Liberation Sans">AVDD18_IO</text>
<text x="833.5" y="419.4" font-size="2.8" fill="#8a5a60" font-family="Liberation Sans">AC7</text>
<line x1="832" y1="426.5" x2="904" y2="426.5" stroke="#bc909e" stroke-width="1"/>
<path d="M906 425L904 426.5L906 428" stroke="#e86a6a" stroke-width="0.6" fill="none"/>
<text x="908" y="427.8" font-size="3.0" fill="#e86a6a" font-family="Liberation Sans">AVDD_RFL</text>
<text x="927" y="427.8" font-size="3.1" fill="#e86a6a" font-family="Liberation Sans">1V1V8</text>
<text x="812" y="427.2" font-size="2.9" fill="#7a88b0" font-family="Liberation Sans">AVDD18_IO</text>
<text x="833.5" y="425.4" font-size="2.8" fill="#8a5a60" font-family="Liberation Sans">AC7</text>
<line x1="832" y1="432.5" x2="904" y2="432.5" stroke="#bc909e" stroke-width="1"/>
<path d="M906 430.5L904 432.0L906 433.5" stroke="#e86a6a" stroke-width="0.6" fill="none"/>
<text x="908" y="433.3" font-size="3.0" fill="#e86a6a" font-family="Liberation Sans">AVDD18_MD</text>
<text x="927" y="433.3" font-size="3.1" fill="#e86a6a" font-family="Liberation Sans">1V8</text>
<text x="812" y="432.7" font-size="2.9" fill="#7a88b0" font-family="Liberation Sans">AVDD18_IO</text>
<text x="833.5" y="430.9" font-size="2.8" fill="#8a5a60" font-family="Liberation Sans">AC7</text>
<line x1="851.5" y1="420" x2="851.5" y2="466" stroke="#9a8a96" stroke-width="1"/>
<text transform="translate(855.2,464) rotate(-90)" font-size="2.9" fill="#6a5a6a" font-family="Liberation Sans">C851  4.7uF  0201  X5R  6.3V</text>
<text transform="translate(850.2,464) rotate(-90)" font-size="2.6" fill="#8a7a90" font-family="Liberation Sans" opacity="0.8">PLACE NEAR  PIN</text>
<line x1="849" y1="446.5" x2="855" y2="446.5" stroke="#8a8ad0" stroke-width="0.9"/>
<line x1="849" y1="448.5" x2="855" y2="448.5" stroke="#8a8ad0" stroke-width="0.9"/>
<rect x="850" y="451" width="2.5" height="3" fill="#e89090" opacity="0.8"/>
<line x1="847" y1="462.5" x2="852" y2="462.5" stroke="#807080" stroke-width="1.0"/>
<circle cx="851.5" cy="420.5" r="0.9" fill="#704050"/>
<line x1="866.5" y1="414" x2="866.5" y2="460" stroke="#9a8a96" stroke-width="1"/>
<text transform="translate(870.2,458) rotate(-90)" font-size="2.9" fill="#6a5a6a" font-family="Liberation Sans">C866  4.7uF  0201  X5R  6.3V</text>
<text transform="translate(865.2,458) rotate(-90)" font-size="2.6" fill="#8a7a90" font-family="Liberation Sans" opacity="0.8">PLACE NEAR  PIN</text>
<line x1="864" y1="442.5" x2="870" y2="442.5" stroke="#8a8ad0" stroke-width="0.9"/>
<line x1="864" y1="444.5" x2="870" y2="444.5" stroke="#8a8ad0" stroke-width="0.9"/>
<rect x="865" y="447" width="2.5" height="3" fill="#e89090" opacity="0.8"/>
<line x1="862" y1="456.5" x2="867" y2="456.5" stroke="#807080" stroke-width="1.0"/>
<circle cx="866.5" cy="414.5" r="0.9" fill="#704050"/>
<line x1="880.5" y1="426" x2="880.5" y2="466" stroke="#9a8a96" stroke-width="1"/>
<text transform="translate(884.2,464) rotate(-90)" font-size="2.9" fill="#6a5a6a" font-family="Liberation Sans">C880  4.7uF  0201  X5R  6.3V</text>
<text transform="translate(879.2,464) rotate(-90)" font-size="2.6" fill="#8a7a90" font-family="Liberation Sans" opacity="0.8">PLACE NEAR  PIN</text>
<line x1="878" y1="450.5" x2="884" y2="450.5" stroke="#8a8ad0" stroke-width="0.9"/>
<line x1="878" y1="452.5" x2="884" y2="452.5" stroke="#8a8ad0" stroke-width="0.9"/>
<rect x="879" y="455" width="2.5" height="3" fill="#e89090" opacity="0.8"/>
<line x1="876" y1="462.5" x2="881" y2="462.5" stroke="#807080" stroke-width="1.0"/>
<circle cx="880.5" cy="426.5" r="0.9" fill="#704050"/>
<path d="M1066.5 232.5H1152.5V531.5H1066.5Z M1108.5 240V531.5 M1111.5 240V531.5" stroke="#6a6ae0" stroke-width="0.9" fill="none"/>
<rect x="1066.5" y="240.5" width="42" height="6" fill="none" stroke="#6a6ae0" stroke-width="0.8"/>
<rect x="1111.5" y="240.5" width="41" height="6" fill="none" stroke="#6a6ae0" stroke-width="0.8"/>
<path d="M1068 241.5V246M1106 241.5L1108 243.5L1106 246M1113 241.5V246M1150 241.5Q1152 243.5 1150 246" stroke="#6a6ae0" stroke-width="0.9" fill="none"/>
<text x="1078" y="239.3" font-size="5.3" fill="#4a4ad8" font-family="Liberation Sans" letter-spacing="0.3">MT6785-SBS</text>
<text x="1073" y="245.5" font-size="4.3" fill="#6a6ae0" font-family="Liberation Sans">GND</text>
<text x="1118" y="245.5" font-size="4.3" fill="#6a6ae0" font-family="Liberation Sans">GND</text>
<text x="1067" y="229" font-size="3.0" fill="#9090d0" font-family="Liberation Sans">U01</text>
<text x="1067" y="231.5" font-size="3.0" fill="#9090d0" font-family="Liberation Sans">MT6785</text>
<path d="M1047.5 249.60H1066.5 M1047.5 252.36H1066.5 M1047.5 255.11H1066.5 M1047.5 257.87H1066.5 M1047.5 260.63H1066.5 M1047.5 263.38H1066.5 M1047.5 266.14H1066.5 M1047.5 268.90H1066.5 M1047.5 271.66H1066.5 M1047.5 274.41H1066.5 M1047.5 277.17H1066.5 M1047.5 279.93H1066.5 M1047.5 282.68H1066.5 M1047.5 285.44H1066.5 M1047.5 288.20H1066.5 M1047.5 290.95H1066.5 M1047.5 293.71H1066.5 M1047.5 296.47H1066.5 M1047.5 299.23H1066.5 M1047.5 301.98H1066.5 M1047.5 304.74H1066.5 M1047.5 307.50H1066.5 M1047.5 310.25H1066.5 M1047.5 313.01H1066.5 M1047.5 315.77H1066.5 M1047.5 318.52H1066.5 M1047.5 321.28H1066.5 M1047.5 324.04H1066.5 M1047.5 326.80H1066.5 M1047.5 329.55H1066.5 M1047.5 332.31H1066.5 M1047.5 335.07H1066.5 M1047.5 337.82H1066.5 M1047.5 340.58H1066.5 M1047.5 343.34H1066.5 M1047.5 346.10H1066.5 M1047.5 348.85H1066.5 M1047.5 351.61H1066.5 M1047.5 354.37H1066.5 M1047.5 357.12H1066.5 M1047.5 359.88H1066.5 M1047.5 362.64H1066.5 M1047.5 365.39H1066.5 M1047.5 368.15H1066.5 M1047.5 370.91H1066.5 M1047.5 373.67H1066.5 M1047.5 376.42H1066.5 M1047.5 379.18H1066.5 M1047.5 381.94H1066.5 M1047.5 384.69H1066.5 M1047.5 387.45H1066.5 M1047.5 390.21H1066.5 M1047.5 392.96H1066.5 M1047.5 395.72H1066.5 M1047.5 398.48H1066.5 M1047.5 401.24H1066.5 M1047.5 403.99H1066.5 M1047.5 406.75H1066.5 M1047.5 409.51H1066.5 M1047.5 412.26H1066.5 M1047.5 415.02H1066.5 M1047.5 417.78H1066.5 M1047.5 420.53H1066.5 M1047.5 423.29H1066.5 M1047.5 426.05H1066.5 M1047.5 428.81H1066.5 M1047.5 431.56H1066.5 M1047.5 434.32H1066.5 M1047.5 437.08H1066.5 M1047.5 439.83H1066.5 M1047.5 442.59H1066.5 M1047.5 445.35H1066.5 M1047.5 448.10H1066.5 M1047.5 450.86H1066.5 M1047.5 453.62H1066.5 M1047.5 456.38H1066.5 M1047.5 459.13H1066.5 M1047.5 461.89H1066.5 M1047.5 464.65H1066.5 M1047.5 467.40H1066.5 M1047.5 470.16H1066.5 M1047.5 472.92H1066.5 M1047.5 475.67H1066.5 M1047.5 478.43H1066.5 M1047.5 481.19H1066.5 M1047.5 483.94H1066.5 M1047.5 486.70H1066.5 M1047.5 489.46H1066.5 M1047.5 492.22H1066.5 M1047.5 494.97H1066.5 M1047.5 497.73H1066.5 M1047.5 500.49H1066.5 M1047.5 503.24H1066.5 M1047.5 506.00H1066.5 M1047.5 508.76H1066.5 M1047.5 511.51H1066.5 M1047.5 514.27H1066.5 M1047.5 517.03H1066.5 M1047.5 519.79H1066.5 M1047.5 522.54H1066.5" stroke="#c08898" stroke-width="0.6" fill="none"/>
<path d="M1152.5 249.60H1171.5 M1152.5 252.36H1171.5 M1152.5 255.11H1171.5 M1152.5 257.87H1171.5 M1152.5 260.63H1171.5 M1152.5 263.38H1171.5 M1152.5 266.14H1171.5 M1152.5 268.90H1171.5 M1152.5 271.66H1171.5 M1152.5 274.41H1171.5 M1152.5 277.17H1171.5 M1152.5 279.93H1171.5 M1152.5 282.68H1171.5 M1152.5 285.44H1171.5 M1152.5 288.20H1171.5 M1152.5 290.95H1171.5 M1152.5 293.71H1171.5 M1152.5 296.47H1171.5 M1152.5 299.23H1171.5 M1152.5 301.98H1171.5 M1152.5 304.74H1171.5 M1152.5 307.50H1171.5 M1152.5 310.25H1171.5 M1152.5 313.01H1171.5 M1152.5 315.77H1171.5 M1152.5 318.52H1171.5 M1152.5 321.28H1171.5 M1152.5 324.04H1171.5 M1152.5 326.80H1171.5 M1152.5 329.55H1171.5 M1152.5 332.31H1171.5 M1152.5 335.07H1171.5 M1152.5 337.82H1171.5 M1152.5 340.58H1171.5 M1152.5 343.34H1171.5 M1152.5 346.10H1171.5 M1152.5 348.85H1171.5 M1152.5 351.61H1171.5 M1152.5 354.37H1171.5 M1152.5 357.12H1171.5 M1152.5 359.88H1171.5 M1152.5 362.64H1171.5 M1152.5 365.39H1171.5 M1152.5 368.15H1171.5 M1152.5 370.91H1171.5 M1152.5 373.67H1171.5 M1152.5 376.42H1171.5 M1152.5 379.18H1171.5 M1152.5 381.94H1171.5 M1152.5 384.69H1171.5 M1152.5 387.45H1171.5 M1152.5 390.21H1171.5 M1152.5 392.96H1171.5 M1152.5 395.72H1171.5 M1152.5 398.48H1171.5 M1152.5 401.24H1171.5 M1152.5 403.99H1171.5 M1152.5 406.75H1171.5 M1152.5 409.51H1171.5 M1152.5 412.26H1171.5 M1152.5 415.02H1171.5 M1152.5 417.78H1171.5 M1152.5 420.53H1171.5 M1152.5 423.29H1171.5 M1152.5 426.05H1171.5 M1152.5 428.81H1171.5 M1152.5 431.56H1171.5 M1152.5 434.32H1171.5 M1152.5 437.08H1171.5 M1152.5 439.83H1171.5 M1152.5 442.59H1171.5 M1152.5 445.35H1171.5 M1152.5 448.10H1171.5 M1152.5 450.86H1171.5 M1152.5 453.62H1171.5 M1152.5 456.38H1171.5 M1152.5 459.13H1171.5 M1152.5 461.89H1171.5 M1152.5 464.65H1171.5 M1152.5 467.40H1171.5 M1152.5 470.16H1171.5 M1152.5 472.92H1171.5 M1152.5 475.67H1171.5 M1152.5 478.43H1171.5 M1152.5 481.19H1171.5 M1152.5 483.94H1171.5 M1152.5 486.70H1171.5 M1152.5 489.46H1171.5 M1152.5 492.22H1171.5 M1152.5 494.97H1171.5 M1152.5 497.73H1171.5 M1152.5 500.49H1171.5 M1152.5 503.24H1171.5 M1152.5 506.00H1171.5 M1152.5 508.76H1171.5 M1152.5 511.51H1171.5 M1152.5 514.27H1171.5 M1152.5 517.03H1171.5" stroke="#c08898" stroke-width="0.6" fill="none"/>
<line x1="1047.5" y1="249" x2="1047.5" y2="533" stroke="#d838c0" stroke-width="0.9"/>
<line x1="1171.5" y1="249" x2="1171.5" y2="533" stroke="#d838c0" stroke-width="0.9"/>
<g fill="#9a4a50" font-family="Liberation Sans"><text x="1058" y="250.70" font-size="3.1">C21</text><text x="1058" y="253.46" font-size="3.1">AA3</text><text x="1058" y="256.21" font-size="3.1">D14</text><text x="1058" y="258.97" font-size="3.1">AC11</text><text x="1058" y="261.73" font-size="3.1">B7</text><text x="1058" y="264.49" font-size="3.1">A12</text><text x="1058" y="267.24" font-size="3.1">AC11</text><text x="1058" y="270.00" font-size="3.1">AB9</text><text x="1058" y="272.76" font-size="3.1">C21</text><text x="1058" y="275.51" font-size="3.1">C21</text><text x="1058" y="278.27" font-size="3.1">AC11</text><text x="1058" y="281.03" font-size="3.1">AC11</text><text x="1058" y="283.78" font-size="3.1">E2</text><text x="1058" y="286.54" font-size="3.1">AA3</text><text x="1058" y="289.30" font-size="3.1">C21</text><text x="1058" y="292.06" font-size="3.1">AA3</text><text x="1058" y="294.81" font-size="3.1">E2</text><text x="1058" y="297.57" font-size="3.1">A12</text><text x="1058" y="300.33" font-size="3.1">B7</text><text x="1058" y="303.08" font-size="3.1">AA3</text><text x="1058" y="305.84" font-size="3.1">A12</text><text x="1058" y="308.60" font-size="3.1">AB9</text><text x="1058" y="311.35" font-size="3.1">A12</text><text x="1058" y="314.11" font-size="3.1">AB9</text><text x="1058" y="316.87" font-size="3.1">AC11</text><text x="1058" y="319.62" font-size="3.1">E2</text><text x="1058" y="322.38" font-size="3.1">E2</text><text x="1058" y="325.14" font-size="3.1">E2</text><text x="1058" y="327.90" font-size="3.1">AC11</text><text x="1058" y="330.65" font-size="3.1">AA3</text><text x="1058" y="333.41" font-size="3.1">D14</text><text x="1058" y="336.17" font-size="3.1">B7</text><text x="1058" y="338.92" font-size="3.1">A12</text><text x="1058" y="341.68" font-size="3.1">AA3</text><text x="1058" y="344.44" font-size="3.1">AC11</text><text x="1058" y="347.20" font-size="3.1">C21</text><text x="1058" y="349.95" font-size="3.1">AB9</text><text x="1058" y="352.71" font-size="3.1">E2</text><text x="1058" y="355.47" font-size="3.1">AB9</text><text x="1058" y="358.22" font-size="3.1">E2</text><text x="1058" y="360.98" font-size="3.1">E2</text><text x="1058" y="363.74" font-size="3.1">D14</text><text x="1058" y="366.49" font-size="3.1">E2</text><text x="1058" y="369.25" font-size="3.1">C21</text><text x="1058" y="372.01" font-size="3.1">D14</text><text x="1058" y="374.77" font-size="3.1">A12</text><text x="1058" y="377.52" font-size="3.1">AB9</text><text x="1058" y="380.28" font-size="3.1">AA3</text><text x="1058" y="383.04" font-size="3.1">D14</text><text x="1058" y="385.79" font-size="3.1">B7</text><text x="1058" y="388.55" font-size="3.1">C21</text><text x="1058" y="391.31" font-size="3.1">AB9</text><text x="1058" y="394.06" font-size="3.1">AB9</text><text x="1058" y="396.82" font-size="3.1">B7</text><text x="1058" y="399.58" font-size="3.1">B7</text><text x="1058" y="402.34" font-size="3.1">AC11</text><text x="1058" y="405.09" font-size="3.1">AC11</text><text x="1058" y="407.85" font-size="3.1">B7</text><text x="1058" y="410.61" font-size="3.1">D14</text><text x="1058" y="413.36" font-size="3.1">B7</text><text x="1058" y="416.12" font-size="3.1">E2</text><text x="1058" y="418.88" font-size="3.1">AA3</text><text x="1058" y="421.63" font-size="3.1">A12</text><text x="1058" y="424.39" font-size="3.1">AB9</text><text x="1058" y="427.15" font-size="3.1">E2</text><text x="1058" y="429.91" font-size="3.1">E2</text><text x="1058" y="432.66" font-size="3.1">B7</text><text x="1058" y="435.42" font-size="3.1">A12</text><text x="1058" y="438.18" font-size="3.1">A12</text><text x="1058" y="440.93" font-size="3.1">E2</text><text x="1058" y="443.69" font-size="3.1">D14</text><text x="1058" y="446.45" font-size="3.1">AB9</text><text x="1058" y="449.20" font-size="3.1">C21</text><text x="1058" y="451.96" font-size="3.1">A12</text><text x="1058" y="454.72" font-size="3.1">AB9</text><text x="1058" y="457.48" font-size="3.1">A12</text><text x="1058" y="460.23" font-size="3.1">B7</text><text x="1058" y="462.99" font-size="3.1">B7</text><text x="1058" y="465.75" font-size="3.1">A12</text><text x="1058" y="468.50" font-size="3.1">C21</text><text x="1058" y="471.26" font-size="3.1">E2</text><text x="1058" y="474.02" font-size="3.1">AB9</text><text x="1058" y="476.77" font-size="3.1">AB9</text><text x="1058" y="479.53" font-size="3.1">AA3</text><text x="1058" y="482.29" font-size="3.1">A12</text><text x="1058" y="485.05" font-size="3.1">D14</text><text x="1058" y="487.80" font-size="3.1">D14</text><text x="1058" y="490.56" font-size="3.1">D14</text><text x="1058" y="493.32" font-size="3.1">AA3</text><text x="1058" y="496.07" font-size="3.1">E2</text><text x="1058" y="498.83" font-size="3.1">E2</text><text x="1058" y="501.59" font-size="3.1">AC11</text><text x="1058" y="504.34" font-size="3.1">E2</text><text x="1058" y="507.10" font-size="3.1">B7</text><text x="1058" y="509.86" font-size="3.1">AB9</text><text x="1058" y="512.62" font-size="3.1">E2</text><text x="1058" y="515.37" font-size="3.1">C21</text><text x="1058" y="518.13" font-size="3.1">AB9</text><text x="1058" y="520.89" font-size="3.1">E2</text><text x="1058" y="523.64" font-size="3.1">AB9</text></g>
<g fill="#6a7aa8" font-family="Liberation Sans"><text x="1068" y="250.70" font-size="3.1">GND1</text><text x="1068" y="253.46" font-size="3.1">GND2</text><text x="1068" y="256.21" font-size="3.1">GND3</text><text x="1068" y="258.97" font-size="3.1">GND4</text><text x="1068" y="261.73" font-size="3.1">GND5</text><text x="1068" y="264.49" font-size="3.1">GND6</text><text x="1068" y="267.24" font-size="3.1">GND7</text><text x="1068" y="270.00" font-size="3.1">GND8</text><text x="1068" y="272.76" font-size="3.1">GND9</text><text x="1068" y="275.51" font-size="3.1">GND10</text><text x="1068" y="278.27" font-size="3.1">GND11</text><text x="1068" y="281.03" font-size="3.1">GND12</text><text x="1068" y="283.78" font-size="3.1">GND13</text><text x="1068" y="286.54" font-size="3.1">GND14</text><text x="1068" y="289.30" font-size="3.1">GND15</text><text x="1068" y="292.06" font-size="3.1">GND16</text><text x="1068" y="294.81" font-size="3.1">GND17</text><text x="1068" y="297.57" font-size="3.1">GND18</text><text x="1068" y="300.33" font-size="3.1">GND19</text><text x="1068" y="303.08" font-size="3.1">GND20</text><text x="1068" y="305.84" font-size="3.1">GND21</text><text x="1068" y="308.60" font-size="3.1">GND22</text><text x="1068" y="311.35" font-size="3.1">GND23</text><text x="1068" y="314.11" font-size="3.1">GND24</text><text x="1068" y="316.87" font-size="3.1">GND25</text><text x="1068" y="319.62" font-size="3.1">GND26</text><text x="1068" y="322.38" font-size="3.1">GND27</text><text x="1068" y="325.14" font-size="3.1">GND28</text><text x="1068" y="327.90" font-size="3.1">GND29</text><text x="1068" y="330.65" font-size="3.1">GND30</text><text x="1068" y="333.41" font-size="3.1">GND31</text><text x="1068" y="336.17" font-size="3.1">GND32</text><text x="1068" y="338.92" font-size="3.1">GND33</text><text x="1068" y="341.68" font-size="3.1">GND34</text><text x="1068" y="344.44" font-size="3.1">GND35</text><text x="1068" y="347.20" font-size="3.1">GND36</text><text x="1068" y="349.95" font-size="3.1">GND37</text><text x="1068" y="352.71" font-size="3.1">GND38</text><text x="1068" y="355.47" font-size="3.1">GND39</text><text x="1068" y="358.22" font-size="3.1">GND40</text><text x="1068" y="360.98" font-size="3.1">GND41</text><text x="1068" y="363.74" font-size="3.1">GND42</text><text x="1068" y="366.49" font-size="3.1">GND43</text><text x="1068" y="369.25" font-size="3.1">GND44</text><text x="1068" y="372.01" font-size="3.1">GND45</text><text x="1068" y="374.77" font-size="3.1">GND46</text><text x="1068" y="377.52" font-size="3.1">GND47</text><text x="1068" y="380.28" font-size="3.1">GND48</text><text x="1068" y="383.04" font-size="3.1">GND49</text><text x="1068" y="385.79" font-size="3.1">GND50</text><text x="1068" y="388.55" font-size="3.1">GND51</text><text x="1068" y="391.31" font-size="3.1">GND52</text><text x="1068" y="394.06" font-size="3.1">GND53</text><text x="1068" y="396.82" font-size="3.1">GND54</text><text x="1068" y="399.58" font-size="3.1">GND55</text><text x="1068" y="402.34" font-size="3.1">GND56</text><text x="1068" y="405.09" font-size="3.1">GND57</text><text x="1068" y="407.85" font-size="3.1">GND58</text><text x="1068" y="410.61" font-size="3.1">GND59</text><text x="1068" y="413.36" font-size="3.1">GND60</text><text x="1068" y="416.12" font-size="3.1">GND61</text><text x="1068" y="418.88" font-size="3.1">GND62</text><text x="1068" y="421.63" font-size="3.1">GND63</text><text x="1068" y="424.39" font-size="3.1">GND64</text><text x="1068" y="427.15" font-size="3.1">GND65</text><text x="1068" y="429.91" font-size="3.1">GND66</text><text x="1068" y="432.66" font-size="3.1">GND67</text><text x="1068" y="435.42" font-size="3.1">GND68</text><text x="1068" y="438.18" font-size="3.1">GND69</text><text x="1068" y="440.93" font-size="3.1">GND70</text><text x="1068" y="443.69" font-size="3.1">GND71</text><text x="1068" y="446.45" font-size="3.1">GND72</text><text x="1068" y="449.20" font-size="3.1">GND73</text><text x="1068" y="451.96" font-size="3.1">GND74</text><text x="1068" y="454.72" font-size="3.1">GND75</text><text x="1068" y="457.48" font-size="3.1">GND76</text><text x="1068" y="460.23" font-size="3.1">GND77</text><text x="1068" y="462.99" font-size="3.1">GND78</text><text x="1068" y="465.75" font-size="3.1">GND79</text><text x="1068" y="468.50" font-size="3.1">GND80</text><text x="1068" y="471.26" font-size="3.1">GND81</text><text x="1068" y="474.02" font-size="3.1">GND82</text><text x="1068" y="476.77" font-size="3.1">GND83</text><text x="1068" y="479.53" font-size="3.1">GND84</text><text x="1068" y="482.29" font-size="3.1">GND85</text><text x="1068" y="485.05" font-size="3.1">GND86</text><text x="1068" y="487.80" font-size="3.1">GND87</text><text x="1068" y="490.56" font-size="3.1">GND88</text><text x="1068" y="493.32" font-size="3.1">GND89</text><text x="1068" y="496.07" font-size="3.1">GND90</text><text x="1068" y="498.83" font-size="3.1">GND91</text><text x="1068" y="501.59" font-size="3.1">GND92</text><text x="1068" y="504.34" font-size="3.1">GND93</text><text x="1068" y="507.10" font-size="3.1">GND94</text><text x="1068" y="509.86" font-size="3.1">GND95</text><text x="1068" y="512.62" font-size="3.1">GND96</text><text x="1068" y="515.37" font-size="3.1">GND97</text><text x="1068" y="518.13" font-size="3.1">GND98</text><text x="1068" y="520.89" font-size="3.1">GND99</text><text x="1068" y="523.64" font-size="3.1">GND100</text></g>
<g fill="#6a7aa8" font-family="Liberation Sans"><text x="1140" y="250.70" font-size="3.1">GND101</text><text x="1140" y="253.46" font-size="3.1">GND102</text><text x="1140" y="256.21" font-size="3.1">GND103</text><text x="1140" y="258.97" font-size="3.1">GND104</text><text x="1140" y="261.73" font-size="3.1">GND105</text><text x="1140" y="264.49" font-size="3.1">GND106</text><text x="1140" y="267.24" font-size="3.1">GND107</text><text x="1140" y="270.00" font-size="3.1">GND108</text><text x="1140" y="272.76" font-size="3.1">GND109</text><text x="1140" y="275.51" font-size="3.1">GND110</text><text x="1140" y="278.27" font-size="3.1">GND111</text><text x="1140" y="281.03" font-size="3.1">GND112</text><text x="1140" y="283.78" font-size="3.1">GND113</text><text x="1140" y="286.54" font-size="3.1">GND114</text><text x="1140" y="289.30" font-size="3.1">GND115</text><text x="1140" y="292.06" font-size="3.1">GND116</text><text x="1140" y="294.81" font-size="3.1">GND117</text><text x="1140" y="297.57" font-size="3.1">GND118</text><text x="1140" y="300.33" font-size="3.1">GND119</text><text x="1140" y="303.08" font-size="3.1">GND120</text><text x="1140" y="305.84" font-size="3.1">GND121</text><text x="1140" y="308.60" font-size="3.1">GND122</text><text x="1140" y="311.35" font-size="3.1">GND123</text><text x="1140" y="314.11" font-size="3.1">GND124</text><text x="1140" y="316.87" font-size="3.1">GND125</text><text x="1140" y="319.62" font-size="3.1">GND126</text><text x="1140" y="322.38" font-size="3.1">GND127</text><text x="1140" y="325.14" font-size="3.1">GND128</text><text x="1140" y="327.90" font-size="3.1">GND129</text><text x="1140" y="330.65" font-size="3.1">GND130</text><text x="1140" y="333.41" font-size="3.1">GND131</text><text x="1140" y="336.17" font-size="3.1">GND132</text><text x="1140" y="338.92" font-size="3.1">GND133</text><text x="1140" y="341.68" font-size="3.1">GND134</text><text x="1140" y="344.44" font-size="3.1">GND135</text><text x="1140" y="347.20" font-size="3.1">GND136</text><text x="1140" y="349.95" font-size="3.1">GND137</text><text x="1140" y="352.71" font-size="3.1">GND138</text><text x="1140" y="355.47" font-size="3.1">GND139</text><text x="1140" y="358.22" font-size="3.1">GND140</text><text x="1140" y="360.98" font-size="3.1">GND141</text><text x="1140" y="363.74" font-size="3.1">GND142</text><text x="1140" y="366.49" font-size="3.1">GND143</text><text x="1140" y="369.25" font-size="3.1">GND144</text><text x="1140" y="372.01" font-size="3.1">GND145</text><text x="1140" y="374.77" font-size="3.1">GND146</text><text x="1140" y="377.52" font-size="3.1">GND147</text><text x="1140" y="380.28" font-size="3.1">GND148</text><text x="1140" y="383.04" font-size="3.1">GND149</text><text x="1140" y="385.79" font-size="3.1">GND150</text><text x="1140" y="388.55" font-size="3.1">GND151</text><text x="1140" y="391.31" font-size="3.1">GND152</text><text x="1140" y="394.06" font-size="3.1">GND153</text><text x="1140" y="396.82" font-size="3.1">GND154</text><text x="1140" y="399.58" font-size="3.1">GND155</text><text x="1140" y="402.34" font-size="3.1">GND156</text><text x="1140" y="405.09" font-size="3.1">GND157</text><text x="1140" y="407.85" font-size="3.1">GND158</text><text x="1140" y="410.61" font-size="3.1">GND159</text><text x="1140" y="413.36" font-size="3.1">GND160</text><text x="1140" y="416.12" font-size="3.1">GND161</text><text x="1140" y="418.88" font-size="3.1">GND162</text><text x="1140" y="421.63" font-size="3.1">GND163</text><text x="1140" y="424.39" font-size="3.1">GND164</text><text x="1140" y="427.15" font-size="3.1">GND165</text><text x="1140" y="429.91" font-size="3.1">GND166</text><text x="1140" y="432.66" font-size="3.1">GND167</text><text x="1140" y="435.42" font-size="3.1">GND168</text><text x="1140" y="438.18" font-size="3.1">GND169</text><text x="1140" y="440.93" font-size="3.1">GND170</text><text x="1140" y="443.69" font-size="3.1">GND171</text><text x="1140" y="446.45" font-size="3.1">GND172</text><text x="1140" y="449.20" font-size="3.1">GND173</text><text x="1140" y="451.96" font-size="3.1">GND174</text><text x="1140" y="454.72" font-size="3.1">GND175</text><text x="1140" y="457.48" font-size="3.1">GND176</text><text x="1140" y="460.23" font-size="3.1">GND177</text><text x="1140" y="462.99" font-size="3.1">GND178</text><text x="1140" y="465.75" font-size="3.1">GND179</text><text x="1140" y="468.50" font-size="3.1">GND180</text><text x="1140" y="471.26" font-size="3.1">GND181</text><text x="1140" y="474.02" font-size="3.1">GND182</text><text x="1140" y="476.77" font-size="3.1">GND183</text><text x="1140" y="479.53" font-size="3.1">GND184</text><text x="1140" y="482.29" font-size="3.1">GND185</text><text x="1140" y="485.05" font-size="3.1">GND186</text><text x="1140" y="487.80" font-size="3.1">GND187</text><text x="1140" y="490.56" font-size="3.1">GND188</text><text x="1140" y="493.32" font-size="3.1">GND189</text><text x="1140" y="496.07" font-size="3.1">GND190</text><text x="1140" y="498.83" font-size="3.1">GND191</text><text x="1140" y="501.59" font-size="3.1">GND192</text><text x="1140" y="504.34" font-size="3.1">GND193</text><text x="1140" y="507.10" font-size="3.1">GND194</text><text x="1140" y="509.86" font-size="3.1">GND195</text><text x="1140" y="512.62" font-size="3.1">GND196</text><text x="1140" y="515.37" font-size="3.1">GND197</text><text x="1140" y="518.13" font-size="3.1">GND198</text></g>
<g fill="#9a4a50" font-family="Liberation Sans"><text x="1154" y="250.70" font-size="3.1">AB19</text><text x="1154" y="253.46" font-size="3.1">T14</text><text x="1154" y="256.21" font-size="3.1">AF2</text><text x="1154" y="258.97" font-size="3.1">W2</text><text x="1154" y="261.73" font-size="3.1">T14</text><text x="1154" y="264.49" font-size="3.1">AF2</text><text x="1154" y="267.24" font-size="3.1">W2</text><text x="1154" y="270.00" font-size="3.1">AA13</text><text x="1154" y="272.76" font-size="3.1">AF2</text><text x="1154" y="275.51" font-size="3.1">T14</text><text x="1154" y="278.27" font-size="3.1">AC1</text><text x="1154" y="281.03" font-size="3.1">T14</text><text x="1154" y="283.78" font-size="3.1">T14</text><text x="1154" y="286.54" font-size="3.1">AB19</text><text x="1154" y="289.30" font-size="3.1">AC1</text><text x="1154" y="292.06" font-size="3.1">AF2</text><text x="1154" y="294.81" font-size="3.1">AF2</text><text x="1154" y="297.57" font-size="3.1">AF2</text><text x="1154" y="300.33" font-size="3.1">T14</text><text x="1154" y="303.08" font-size="3.1">AB19</text><text x="1154" y="305.84" font-size="3.1">AC1</text><text x="1154" y="308.60" font-size="3.1">AB19</text><text x="1154" y="311.35" font-size="3.1">T14</text><text x="1154" y="314.11" font-size="3.1">AA13</text><text x="1154" y="316.87" font-size="3.1">T14</text><text x="1154" y="319.62" font-size="3.1">AA13</text><text x="1154" y="322.38" font-size="3.1">T14</text><text x="1154" y="325.14" font-size="3.1">T14</text><text x="1154" y="327.90" font-size="3.1">AB19</text><text x="1154" y="330.65" font-size="3.1">AB19</text><text x="1154" y="333.41" font-size="3.1">W2</text><text x="1154" y="336.17" font-size="3.1">B17</text><text x="1154" y="338.92" font-size="3.1">AF2</text><text x="1154" y="341.68" font-size="3.1">AA13</text><text x="1154" y="344.44" font-size="3.1">AB19</text><text x="1154" y="347.20" font-size="3.1">R21</text><text x="1154" y="349.95" font-size="3.1">AB19</text><text x="1154" y="352.71" font-size="3.1">R21</text><text x="1154" y="355.47" font-size="3.1">T14</text><text x="1154" y="358.22" font-size="3.1">AA13</text><text x="1154" y="360.98" font-size="3.1">W2</text><text x="1154" y="363.74" font-size="3.1">B17</text><text x="1154" y="366.49" font-size="3.1">B17</text><text x="1154" y="369.25" font-size="3.1">T14</text><text x="1154" y="372.01" font-size="3.1">T14</text><text x="1154" y="374.77" font-size="3.1">R21</text><text x="1154" y="377.52" font-size="3.1">AC1</text><text x="1154" y="380.28" font-size="3.1">AA13</text><text x="1154" y="383.04" font-size="3.1">B17</text><text x="1154" y="385.79" font-size="3.1">T14</text><text x="1154" y="388.55" font-size="3.1">R21</text><text x="1154" y="391.31" font-size="3.1">AC1</text><text x="1154" y="394.06" font-size="3.1">AB19</text><text x="1154" y="396.82" font-size="3.1">R21</text><text x="1154" y="399.58" font-size="3.1">B17</text><text x="1154" y="402.34" font-size="3.1">AF2</text><text x="1154" y="405.09" font-size="3.1">R21</text><text x="1154" y="407.85" font-size="3.1">T14</text><text x="1154" y="410.61" font-size="3.1">AA13</text><text x="1154" y="413.36" font-size="3.1">AB19</text><text x="1154" y="416.12" font-size="3.1">T14</text><text x="1154" y="418.88" font-size="3.1">B17</text><text x="1154" y="421.63" font-size="3.1">T14</text><text x="1154" y="424.39" font-size="3.1">AA13</text><text x="1154" y="427.15" font-size="3.1">W2</text><text x="1154" y="429.91" font-size="3.1">AB19</text><text x="1154" y="432.66" font-size="3.1">AB19</text><text x="1154" y="435.42" font-size="3.1">AC1</text><text x="1154" y="438.18" font-size="3.1">T14</text><text x="1154" y="440.93" font-size="3.1">W2</text><text x="1154" y="443.69" font-size="3.1">AB19</text><text x="1154" y="446.45" font-size="3.1">W2</text><text x="1154" y="449.20" font-size="3.1">W2</text><text x="1154" y="451.96" font-size="3.1">AF2</text><text x="1154" y="454.72" font-size="3.1">W2</text><text x="1154" y="457.48" font-size="3.1">AA13</text><text x="1154" y="460.23" font-size="3.1">R21</text><text x="1154" y="462.99" font-size="3.1">AF2</text><text x="1154" y="465.75" font-size="3.1">AC1</text><text x="1154" y="468.50" font-size="3.1">W2</text><text x="1154" y="471.26" font-size="3.1">R21</text><text x="1154" y="474.02" font-size="3.1">AF2</text><text x="1154" y="476.77" font-size="3.1">AC1</text><text x="1154" y="479.53" font-size="3.1">AB19</text><text x="1154" y="482.29" font-size="3.1">T14</text><text x="1154" y="485.05" font-size="3.1">R21</text><text x="1154" y="487.80" font-size="3.1">B17</text><text x="1154" y="490.56" font-size="3.1">AB19</text><text x="1154" y="493.32" font-size="3.1">B17</text><text x="1154" y="496.07" font-size="3.1">R21</text><text x="1154" y="498.83" font-size="3.1">AF2</text><text x="1154" y="501.59" font-size="3.1">AF2</text><text x="1154" y="504.34" font-size="3.1">R21</text><text x="1154" y="507.10" font-size="3.1">W2</text><text x="1154" y="509.86" font-size="3.1">AF2</text><text x="1154" y="512.62" font-size="3.1">AF2</text><text x="1154" y="515.37" font-size="3.1">AC1</text><text x="1154" y="518.13" font-size="3.1">B17</text></g>
<path d="M1047.5 249.60h0.01 M1047.5 252.36h0.01 M1047.5 255.11h0.01 M1047.5 257.87h0.01 M1047.5 260.63h0.01 M1047.5 263.38h0.01 M1047.5 266.14h0.01 M1047.5 268.90h0.01 M1047.5 271.66h0.01 M1047.5 274.41h0.01 M1047.5 277.17h0.01 M1047.5 279.93h0.01 M1047.5 282.68h0.01 M1047.5 285.44h0.01 M1047.5 288.20h0.01 M1047.5 290.95h0.01 M1047.5 293.71h0.01 M1047.5 296.47h0.01 M1047.5 299.23h0.01 M1047.5 301.98h0.01 M1047.5 304.74h0.01 M1047.5 307.50h0.01 M1047.5 310.25h0.01 M1047.5 313.01h0.01 M1047.5 315.77h0.01 M1047.5 318.52h0.01 M1047.5 321.28h0.01 M1047.5 324.04h0.01 M1047.5 326.80h0.01 M1047.5 329.55h0.01 M1047.5 332.31h0.01 M1047.5 335.07h0.01 M1047.5 337.82h0.01 M1047.5 340.58h0.01 M1047.5 343.34h0.01 M1047.5 346.10h0.01 M1047.5 348.85h0.01 M1047.5 351.61h0.01 M1047.5 354.37h0.01 M1047.5 357.12h0.01 M1047.5 359.88h0.01 M1047.5 362.64h0.01 M1047.5 365.39h0.01 M1047.5 368.15h0.01 M1047.5 370.91h0.01 M1047.5 373.67h0.01 M1047.5 376.42h0.01 M1047.5 379.18h0.01 M1047.5 381.94h0.01 M1047.5 384.69h0.01 M1047.5 387.45h0.01 M1047.5 390.21h0.01 M1047.5 392.96h0.01 M1047.5 395.72h0.01 M1047.5 398.48h0.01 M1047.5 401.24h0.01 M1047.5 403.99h0.01 M1047.5 406.75h0.01 M1047.5 409.51h0.01 M1047.5 412.26h0.01 M1047.5 415.02h0.01 M1047.5 417.78h0.01 M1047.5 420.53h0.01 M1047.5 423.29h0.01 M1047.5 426.05h0.01 M1047.5 428.81h0.01 M1047.5 431.56h0.01 M1047.5 434.32h0.01 M1047.5 437.08h0.01 M1047.5 439.83h0.01 M1047.5 442.59h0.01 M1047.5 445.35h0.01 M1047.5 448.10h0.01 M1047.5 450.86h0.01 M1047.5 453.62h0.01 M1047.5 456.38h0.01 M1047.5 459.13h0.01 M1047.5 461.89h0.01 M1047.5 464.65h0.01 M1047.5 467.40h0.01 M1047.5 470.16h0.01 M1047.5 472.92h0.01 M1047.5 475.67h0.01 M1047.5 478.43h0.01 M1047.5 481.19h0.01 M1047.5 483.94h0.01 M1047.5 486.70h0.01 M1047.5 489.46h0.01 M1047.5 492.22h0.01 M1047.5 494.97h0.01 M1047.5 497.73h0.01 M1047.5 500.49h0.01 M1047.5 503.24h0.01 M1047.5 506.00h0.01 M1047.5 508.76h0.01 M1047.5 511.51h0.01 M1047.5 514.27h0.01 M1047.5 517.03h0.01 M1047.5 519.79h0.01 M1047.5 522.54h0.01" stroke="#d838c0" stroke-width="1.3" stroke-linecap="round" fill="none"/>
<path d="M1171.5 249.60h0.01 M1171.5 252.36h0.01 M1171.5 255.11h0.01 M1171.5 257.87h0.01 M1171.5 260.63h0.01 M1171.5 263.38h0.01 M1171.5 266.14h0.01 M1171.5 268.90h0.01 M1171.5 271.66h0.01 M1171.5 274.41h0.01 M1171.5 277.17h0.01 M1171.5 279.93h0.01 M1171.5 282.68h0.01 M1171.5 285.44h0.01 M1171.5 288.20h0.01 M1171.5 290.95h0.01 M1171.5 293.71h0.01 M1171.5 296.47h0.01 M1171.5 299.23h0.01 M1171.5 301.98h0.01 M1171.5 304.74h0.01 M1171.5 307.50h0.01 M1171.5 310.25h0.01 M1171.5 313.01h0.01 M1171.5 315.77h0.01 M1171.5 318.52h0.01 M1171.5 321.28h0.01 M1171.5 324.04h0.01 M1171.5 326.80h0.01 M1171.5 329.55h0.01 M1171.5 332.31h0.01 M1171.5 335.07h0.01 M1171.5 337.82h0.01 M1171.5 340.58h0.01 M1171.5 343.34h0.01 M1171.5 346.10h0.01 M1171.5 348.85h0.01 M1171.5 351.61h0.01 M1171.5 354.37h0.01 M1171.5 357.12h0.01 M1171.5 359.88h0.01 M1171.5 362.64h0.01 M1171.5 365.39h0.01 M1171.5 368.15h0.01 M1171.5 370.91h0.01 M1171.5 373.67h0.01 M1171.5 376.42h0.01 M1171.5 379.18h0.01 M1171.5 381.94h0.01 M1171.5 384.69h0.01 M1171.5 387.45h0.01 M1171.5 390.21h0.01 M1171.5 392.96h0.01 M1171.5 395.72h0.01 M1171.5 398.48h0.01 M1171.5 401.24h0.01 M1171.5 403.99h0.01 M1171.5 406.75h0.01 M1171.5 409.51h0.01 M1171.5 412.26h0.01 M1171.5 415.02h0.01 M1171.5 417.78h0.01 M1171.5 420.53h0.01 M1171.5 423.29h0.01 M1171.5 426.05h0.01 M1171.5 428.81h0.01 M1171.5 431.56h0.01 M1171.5 434.32h0.01 M1171.5 437.08h0.01 M1171.5 439.83h0.01 M1171.5 442.59h0.01 M1171.5 445.35h0.01 M1171.5 448.10h0.01 M1171.5 450.86h0.01 M1171.5 453.62h0.01 M1171.5 456.38h0.01 M1171.5 459.13h0.01 M1171.5 461.89h0.01 M1171.5 464.65h0.01 M1171.5 467.40h0.01 M1171.5 470.16h0.01 M1171.5 472.92h0.01 M1171.5 475.67h0.01 M1171.5 478.43h0.01 M1171.5 481.19h0.01 M1171.5 483.94h0.01 M1171.5 486.70h0.01 M1171.5 489.46h0.01 M1171.5 492.22h0.01 M1171.5 494.97h0.01 M1171.5 497.73h0.01 M1171.5 500.49h0.01 M1171.5 503.24h0.01 M1171.5 506.00h0.01 M1171.5 508.76h0.01 M1171.5 511.51h0.01 M1171.5 514.27h0.01 M1171.5 517.03h0.01" stroke="#d838c0" stroke-width="1.3" stroke-linecap="round" fill="none"/>
<line x1="1047.5" y1="533" x2="1047.5" y2="535" stroke="#c06080" stroke-width="1"/>
<path d="M1044.5 535.5H1050.5M1045.5 536.8H1049.5M1046.5 538H1048.5" stroke="#c06080" stroke-width="0.6"/>
<text x="1044.0" y="542" font-size="3" fill="#606060" font-family="Liberation Sans">GND</text>
<line x1="1171.5" y1="533" x2="1171.5" y2="535" stroke="#c06080" stroke-width="1"/>
<path d="M1168.5 535.5H1174.5M1169.5 536.8H1173.5M1170.5 538H1172.5" stroke="#c06080" stroke-width="0.6"/>
<text x="1168.0" y="542" font-size="3" fill="#606060" font-family="Liberation Sans">GND</text>
<line x1="730" y1="619.5" x2="937" y2="619.5" stroke="#a0a0a0" stroke-width="0.8"/>
<text x="733" y="627" font-size="5.0" fill="#2828c0" font-family="Liberation Sans" font-weight="bold" letter-spacing="0.18">Schematic  design  notice  of  "11_BB_POWER_IO"  page.</text>
<line x1="730" y1="630.5" x2="937" y2="630.5" stroke="#a0a0a0" stroke-width="0.8"/>
<text x="727" y="638.5" font-size="5.2" fill="#4a4ad0" font-family="Liberation Sans">Note 11-1:</text>
<text x="760" y="637.5" font-size="4.3" fill="#4a4ad0" font-family="Liberation Sans">For D-PHY application, connect MIPI Power domain AVDD04_DSI to DVDD_CORE.</text>
<text x="760" y="642" font-size="4.3" fill="#4a4ad0" font-family="Liberation Sans">For C-PHY application, connect MIPI Power domain AVDD04_DSI to VA12_PMU.</text>
<line x1="730" y1="647.5" x2="937" y2="647.5" stroke="#a0a0a0" stroke-width="0.8"/>
<rect x="1057.5" y="636" width="257" height="99" fill="none" stroke="#333" stroke-width="1.3"/>
<line x1="1057.5" y1="655" x2="1314.5" y2="655" stroke="#333" stroke-width="1.2"/>
<line x1="1057.5" y1="682.5" x2="1314.5" y2="682.5" stroke="#333" stroke-width="1.2"/>
<line x1="1057.5" y1="713" x2="1314.5" y2="713" stroke="#333" stroke-width="1.2"/>
<line x1="1085.5" y1="682.5" x2="1085.5" y2="713" stroke="#333" stroke-width="1.2"/>
<line x1="1289.5" y1="682.5" x2="1289.5" y2="713" stroke="#333" stroke-width="1.2"/>
<line x1="1209.5" y1="713" x2="1209.5" y2="735" stroke="#333" stroke-width="1.2"/>
<text x="1099" y="650" font-size="9.3" fill="#222" font-family="Liberation Mono" xml:space="preserve">Hua  qin Tele  com Technol  ogy Com.Ltd</text>
<g stroke="#111" fill="none"><path d="M1062 642.5h11M1062 645h11M1062 647.5h11M1062 650h11M1064 641v10M1067.5 641v10M1071 641v10" stroke-width="1.1"/></g>
<g stroke="#333" fill="none" stroke-width="0.9"><path d="M1083 642.5l1.5 1.2M1082.5 646h2v4.5l1.2-1M1087 643h5.5v7.5q0 1 1.3 1M1089 646h4M1090.5 643v7"/></g>
<text x="1061" y="667" font-size="8.4" fill="#111" font-family="Liberation Sans" font-weight="bold">Title</text>
<text x="1097" y="673" font-size="13" fill="#111" font-family="Liberation Sans">BB_POWER_IO</text>
<text x="1061" y="694.5" font-size="9" fill="#111" font-family="Liberation Sans" font-weight="bold">Size</text>
<text x="1066" y="708.3" font-size="9" fill="#111" font-family="Liberation Sans" font-weight="bold">D</text>
<text x="1088" y="695.5" font-size="9.1" fill="#111" font-family="Liberation Sans" font-weight="bold">Project</text>
<text x="1135" y="706" font-size="13.5" fill="#111" font-family="Liberation Sans">Hanoi</text>
<text x="1292.5" y="694.5" font-size="9.1" fill="#111" font-family="Liberation Sans" font-weight="bold">Rev</text>
<text x="1296" y="708.3" font-size="9" fill="#111" font-family="Liberation Sans" font-weight="bold">V1</text>
<text x="1061" y="728.3" font-size="8.8" fill="#111" font-family="Liberation Sans" font-weight="bold">Date:</text>
<text x="1093.5" y="728.3" font-size="8.8" fill="#111" font-family="Liberation Sans" font-weight="bold">Wednesday, March 17, 2021</text>
<text x="1212.3" y="728.3" font-size="9" fill="#111" font-family="Liberation Sans" font-weight="bold">Sheet</text>
<text x="1248" y="728.3" font-size="9" fill="#111" font-family="Liberation Sans" font-weight="bold">3</text>
<text x="1265" y="728.3" font-size="9" fill="#111" font-family="Liberation Sans" font-weight="bold">of</text>
<text x="1286.5" y="728.3" font-size="9" fill="#111" font-family="Liberation Sans" font-weight="bold">99</text>
</svg>

<div class="abs" style="left:1520px;top:31px;width:1px;height:828px;background:#6cc6e6"></div>
<div id="status" class="abs"></div>
<div class="abs mono" style="left:0;top:843px;font-size:12px;letter-spacing:-1.2px;color:#fff">Version:1.0.0.52</div>
<div class="abs mono" style="left:1345px;top:843px;font-size:12px;letter-spacing:-1.2px;color:#fff">Current [XT2133-x_Schematics]</div>
</body></html>
